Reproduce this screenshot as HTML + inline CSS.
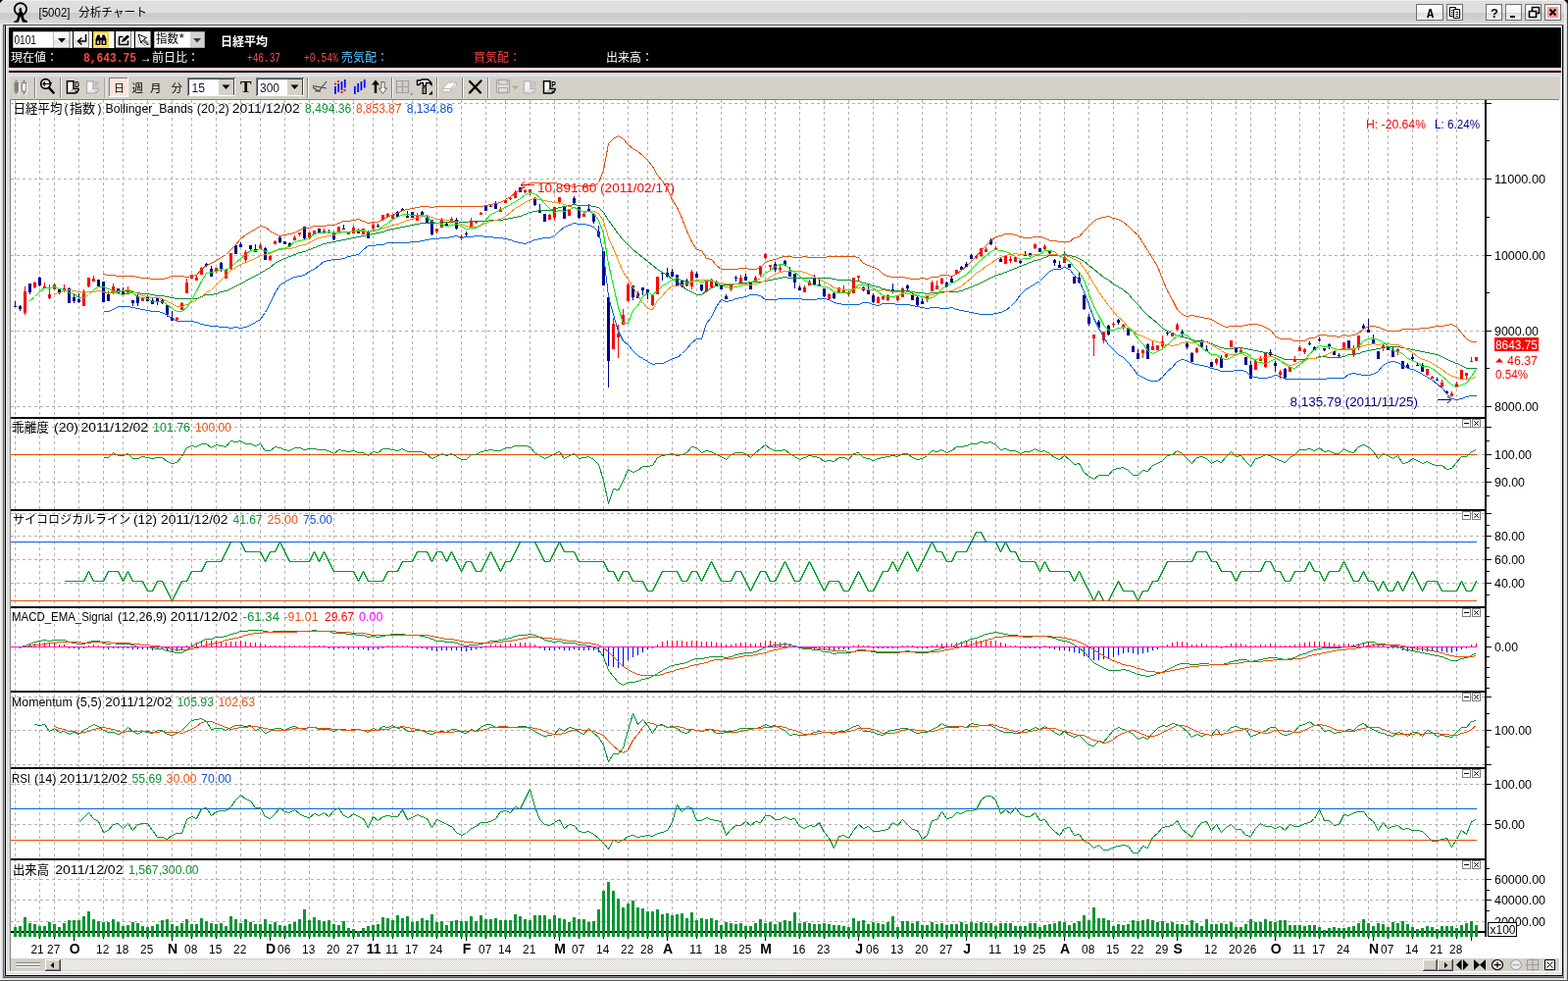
<!DOCTYPE html><html><head><meta charset="utf-8"><title>[5002] chart</title><style>html,body{margin:0;padding:0;background:#fff}svg{display:block;will-change:transform;opacity:0.9999}text{font-family:"Liberation Sans","Noto Sans CJK JP",sans-serif;white-space:pre}</style></head><body><svg width="1599" height="1000" viewBox="0 0 1599 1000"><defs><linearGradient id="tb" x1="0" y1="0" x2="0" y2="1"><stop offset="0" stop-color="#eee"/><stop offset="0.04" stop-color="#eee"/><stop offset="0.05" stop-color="#dedede"/><stop offset="0.52" stop-color="#dedede"/><stop offset="0.53" stop-color="#ccc"/><stop offset="0.68" stop-color="#ccc"/><stop offset="0.96" stop-color="#dcdcdc"/><stop offset="0.965" stop-color="#e8e8e8"/><stop offset="1" stop-color="#e8e8e8"/></linearGradient><linearGradient id="bt" x1="0" y1="0" x2="0" y2="1"><stop offset="0" stop-color="#ffffff"/><stop offset="0.5" stop-color="#f4f4f4"/><stop offset="0.52" stop-color="#dcdcdc"/><stop offset="1" stop-color="#f4f4f4"/></linearGradient><linearGradient id="lf" x1="0" y1="0" x2="1" y2="0"><stop offset="0" stop-color="#f6f6f6"/><stop offset="1" stop-color="#d4d4d4"/></linearGradient><pattern id="dith" width="2" height="2" patternUnits="userSpaceOnUse"><rect width="2" height="2" fill="#d4d0c8"/><rect width="1" height="1" fill="#fff"/><rect x="1" y="1" width="1" height="1" fill="#fff"/></pattern></defs><rect width="1599" height="1000" fill="#dcdcdc"/><rect x="0" y="0" width="1597" height="25" fill="url(#tb)"/><rect x="0" y="25" width="3" height="972" fill="url(#lf)"/><rect x="3" y="25" width="1592" height="1" fill="#505050"/><rect x="3" y="25" width="1" height="972" fill="#606060"/><rect x="4" y="26" width="1" height="970" fill="#b0b0b0"/><rect x="5" y="26" width="1" height="969" fill="#000"/><rect x="6" y="26" width="1587" height="2" fill="#f2f2f2"/><rect x="6" y="26" width="1" height="968" fill="#ececec"/><rect x="7" y="28" width="3" height="965" fill="#dcdcdc"/><rect x="1591" y="28" width="2" height="966" fill="#ececec"/><rect x="1593" y="26" width="1" height="969" fill="#000"/><rect x="1594" y="25" width="1" height="972" fill="#a0a0a0"/><rect x="1595" y="0" width="3" height="999" fill="url(#lf)"/><rect x="1598" y="0" width="1" height="1000" fill="#505050"/><rect x="6" y="990" width="1587" height="1" fill="#fff"/><rect x="6" y="991" width="1587" height="2" fill="#e2e2e2"/><rect x="6" y="993" width="1587" height="1" fill="#f8f8f8"/><rect x="5" y="994" width="1589" height="1" fill="#000"/><rect x="4" y="995" width="1591" height="1" fill="#909090"/><rect x="3" y="996" width="1592" height="1" fill="#505050"/><rect x="0" y="997" width="1598" height="2" fill="#e8e8e8"/><rect x="0" y="999" width="1599" height="1" fill="#505050"/><path d="M0 0h3l-3 3z" fill="#000"/><path d="M1599 0h-4l4 4z" fill="#000"/><rect x="9" y="28" width="1583" height="41" fill="#000"/><rect x="9" y="69" width="1583" height="3" fill="#ffd2d2"/><rect x="9" y="72" width="1583" height="2" fill="#000"/><rect x="9" y="74" width="1583" height="2" fill="#d2d6f0"/><rect x="9" y="76" width="1583" height="2" fill="#e2e2e0"/><rect x="10" y="78" width="1581" height="23" fill="#d4d0c8"/><rect x="10" y="101" width="1581" height="889" fill="#fff"/><rect x="10" y="101" width="1580" height="1" fill="#808080"/><rect x="10" y="101" width="1" height="889" fill="#808080"/><rect x="11" y="977" width="1579" height="13" fill="#d4d0c8"/><rect x="62" y="978" width="1389" height="11" fill="url(#dith)"/><circle cx="20.9" cy="9.2" r="6.1" fill="none" stroke="#000" stroke-width="1.8"/><path d="M20.9 7.6L22.1 8.5L22 10.6L22.9 12.8L24.6 14.6L23.9 17L25.2 20L27.9 21.2V22.7L23.4 22.8L22 20.5L21.3 17.3H20.5L19.6 20.5L18.5 22.8H14.2V21.8L17 20.4L18.1 17L17.5 14.6L19.4 12.6L20 10.8L19 10.4L20 8.5z" fill="#000"/><text x="39.5" y="17" fill="#000" font-size="12.5" textLength="32" lengthAdjust="spacingAndGlyphs">[5002]</text><text x="80" y="17" fill="#000" font-size="12" textLength="70" lengthAdjust="spacingAndGlyphs">分析チャート</text><rect x="1444.5" y="4.5" width="27" height="16" fill="url(#bt)" stroke="#707070"/><rect x="1475.5" y="4.5" width="16" height="16" fill="url(#bt)" stroke="#707070"/><rect x="1515.5" y="4.5" width="16" height="16" fill="url(#bt)" stroke="#707070"/><rect x="1535.5" y="4.5" width="16" height="16" fill="url(#bt)" stroke="#707070"/><rect x="1555.5" y="4.5" width="16" height="16" fill="url(#bt)" stroke="#707070"/><rect x="1575.5" y="4.5" width="16" height="16" fill="url(#bt)" stroke="#707070"/><text x="1458.5" y="17.5" fill="#000" font-size="12" style="font-family:'Liberation Mono',monospace" font-weight="bold" text-anchor="middle">A</text><path d="M1478.500 7.500h6v9h-6z" fill="#fff" stroke="#000" stroke-width="1"/><path d="M1482.500 9.500h6v9h-6z" fill="#fff" stroke="#000" stroke-width="1"/><path d="M1480 10.500h1.500M1480 12.500h1.500M1480 14.500h1.500M1484.500 12.500h2.500M1484.500 14.500h2.500M1484.500 16.500h2.500" stroke="#000" stroke-width="1"/><text x="1524" y="18" fill="#000" font-size="13" font-weight="bold" text-anchor="middle">?</text><rect x="1540" y="16" width="5" height="2" fill="#000"/><path d="M1562.500 7.5h7v6h-7z" fill="none" stroke="#000" stroke-width="1.6"/><path d="M1559.5 11.500h7v6h-7z" fill="#f4f4f4" stroke="#000" stroke-width="1.6"/><rect x="1578" y="7" width="11" height="11" fill="#ff9c9c"/><path d="M1580.500 9.500l6 6m0 -6l-6 6" stroke="#000" stroke-width="1.800"/><rect x="13" y="32" width="58" height="17" fill="#707070"/><rect x="13.5" y="32.5" width="41" height="16" fill="#fff"/><rect x="55" y="32.500" width="15.5" height="16" fill="url(#bt)"/><path d="M59 39h8l-4 4.500z" fill="#000"/><text x="14.5" y="44.5" fill="#000" font-size="12" textLength="22.5" lengthAdjust="spacingAndGlyphs">0101</text><rect x="71.3" y="32" width="2.7" height="17" fill="#fff"/><rect x="91" y="32" width="2.8" height="17" fill="#fff"/><rect x="111" y="32" width="5.5" height="17" fill="#fff"/><rect x="134" y="32" width="2.8" height="17" fill="#fff"/><rect x="75" y="32" width="16" height="17" fill="#808080"/><rect x="75" y="32" width="15" height="16" fill="#fff"/><rect x="76" y="33" width="14" height="15" fill="url(#bt)"/><rect x="118" y="32" width="16" height="17" fill="#808080"/><rect x="118" y="32" width="15" height="16" fill="#fff"/><rect x="119" y="33" width="14" height="15" fill="url(#bt)"/><rect x="138" y="32" width="16" height="17" fill="#808080"/><rect x="138" y="32" width="15" height="16" fill="#fff"/><rect x="139" y="33" width="14" height="15" fill="url(#bt)"/><rect x="95" y="32" width="16" height="17" fill="#ffd23c"/><rect x="97" y="34" width="12" height="13" fill="#fff8dc"/><path d="M87.5 35v7h-7M83.500 38.5l-4 3.500l4 3.500" fill="none" stroke="#000" stroke-width="1.500"/><path d="M97.500 46v-6l1.800 -4.500h2.400l0.800 4.500v6zM103.500 46v-6l0.800 -4.500h2.400l1.800 4.500v6z" fill="#000"/><rect x="102" y="38.500" width="2" height="2.500" fill="#000"/><rect x="99" y="41.500" width="2" height="3.200" fill="#ffd23c"/><rect x="105" y="41.500" width="2" height="3.200" fill="#ffd23c"/><path d="M121.500 37.500v8h9v-4M121.500 37.500h4" fill="none" stroke="#000" stroke-width="1.5"/><path d="M124 43l1 -3l5 -4.500l2 2l-5 4.500z" fill="#000"/><path d="M141 35l3 9l1.500 -3l5 5l1 -1l-5 -5l3 -1.500z" fill="#fff" stroke="#000" stroke-width="1"/><path d="M146 42l4 4M148 41l3 3M145 44l3 3" stroke="#606060" stroke-width="0.8"/><rect x="157" y="32" width="52" height="17" fill="#707070"/><rect x="157.500" y="32.500" width="36.500" height="16" fill="#fff"/><rect x="194" y="32.500" width="14.500" height="16" fill="#d2d2d2"/><path d="M197 39h8l-4 4.500z" fill="#383838"/><text x="159" y="44" fill="#000" font-size="12" textLength="23" lengthAdjust="spacingAndGlyphs">指数</text><text x="182.5" y="43" fill="#000" font-size="12" textLength="5.5" lengthAdjust="spacingAndGlyphs">*</text><text x="225" y="46.5" fill="#fff" font-size="12.5" font-weight="bold" textLength="48" lengthAdjust="spacingAndGlyphs">日経平均</text><text x="11" y="63" fill="#fff" font-size="12" textLength="48" lengthAdjust="spacingAndGlyphs">現在値：</text><text x="85" y="63" fill="#ff4848" font-size="12" textLength="54" lengthAdjust="spacingAndGlyphs" style="font-family:'Liberation Mono',monospace" font-weight="bold">8,643.75</text><text x="143" y="63" fill="#fff" font-size="12" textLength="60" lengthAdjust="spacingAndGlyphs">→前日比：</text><text x="252" y="63.3" fill="#ff4848" font-size="12.5" textLength="34" lengthAdjust="spacingAndGlyphs" style="font-family:'Liberation Mono',monospace">+46.37</text><text x="310" y="63.3" fill="#ff4848" font-size="12.5" textLength="35" lengthAdjust="spacingAndGlyphs" style="font-family:'Liberation Mono',monospace">+0.54%</text><text x="348" y="63" fill="#60c8ff" font-size="12" textLength="48" lengthAdjust="spacingAndGlyphs">売気配：</text><text x="483" y="63" fill="#ff4040" font-size="12" textLength="48" lengthAdjust="spacingAndGlyphs">買気配：</text><text x="618" y="63" fill="#fff" font-size="12" textLength="48" lengthAdjust="spacingAndGlyphs">出来高：</text><rect x="35" y="79" width="1" height="21" fill="#808080"/><rect x="36" y="79" width="1" height="21" fill="#fff"/><rect x="61" y="79" width="1" height="21" fill="#808080"/><rect x="62" y="79" width="1" height="21" fill="#fff"/><rect x="106.5" y="79" width="1" height="21" fill="#808080"/><rect x="107.5" y="79" width="1" height="21" fill="#fff"/><rect x="313" y="79" width="1" height="21" fill="#808080"/><rect x="314" y="79" width="1" height="21" fill="#fff"/><rect x="399" y="79" width="1" height="21" fill="#808080"/><rect x="400" y="79" width="1" height="21" fill="#fff"/><rect x="445" y="79" width="1" height="21" fill="#808080"/><rect x="446" y="79" width="1" height="21" fill="#fff"/><rect x="471" y="79" width="1" height="21" fill="#808080"/><rect x="472" y="79" width="1" height="21" fill="#fff"/><rect x="497" y="79" width="1" height="21" fill="#808080"/><rect x="498" y="79" width="1" height="21" fill="#fff"/><path d="M16.500 81.500v14.500M24.500 81.500v14.500" stroke="#808080" stroke-width="1.600"/><rect x="14.500" y="84" width="4.500" height="9.500" fill="#808080"/><rect x="22.500" y="84.500" width="4" height="8.500" fill="#fff" stroke="#808080" stroke-width="1"/><path d="M19.500 85v9M27.500 85v9M17.500 96h2M25.500 96h2" stroke="#fff" stroke-width="1"/><circle cx="46.500" cy="85.500" r="4.800" fill="#e8e8e8" stroke="#000" stroke-width="1.700"/><path d="M50 89.500l4.500 5" stroke="#000" stroke-width="2.600" stroke-linecap="round"/><path d="M44 85.500h6l3 -1M46 83.500l-2 2l2 2" stroke="#000" stroke-width="1.200" fill="none"/><path d="M68.5 82.800h6.500v7.700h5v1.500l-3 3h-8.500z" fill="#fff" stroke="#000" stroke-width="1.500" stroke-linejoin="miter"/><path d="M69.3 94.200l6 -5.500v5.500z" fill="#000" opacity="0.22"/><path d="M77.0 92v2.500h2.500" fill="none" stroke="#000" stroke-width="1"/><text x="76.2" y="89.3" fill="#000" font-size="9" textLength="4.6" lengthAdjust="spacingAndGlyphs" font-weight="bold">D</text><path d="M88.5 82.800h6.500v7.700h5v1.500l-3 3h-8.500z" fill="#f4f4f4" stroke="#b4b4b4" stroke-width="1.500" stroke-linejoin="miter"/><path d="M89.3 94.200l6 -5.500v5.500z" fill="#b4b4b4" opacity="0.22"/><path d="M97.0 92v2.500h2.500" fill="none" stroke="#b4b4b4" stroke-width="1"/><text x="96.2" y="89.3" fill="#b4b4b4" font-size="9" textLength="4.600" lengthAdjust="spacingAndGlyphs" font-weight="bold">R</text><rect x="111" y="79" width="20" height="20" fill="#fff"/><rect x="111" y="79" width="19" height="19" fill="#808080"/><rect x="112" y="80" width="18" height="18" fill="#ffe4dc"/><text x="116" y="94" fill="#000" font-size="11">日</text><text x="134.5" y="94" fill="#000" font-size="11.5">週</text><text x="153" y="94" fill="#000" font-size="11.5">月</text><text x="174.5" y="94" fill="#000" font-size="11.5">分</text><rect x="191" y="79" width="49" height="19" fill="#808080"/><rect x="192" y="80" width="48" height="18" fill="#fff"/><rect x="192" y="80" width="47" height="17" fill="#404040"/><rect x="193" y="81" width="45" height="16" fill="#fff"/><rect x="223" y="81" width="15" height="16" fill="#d4d0c8"/><path d="M226.5 86.500h8l-4 4.500z" fill="#000"/><text x="195.5" y="94" fill="#101030" font-size="12.5" textLength="13.5" lengthAdjust="spacingAndGlyphs">15</text><rect x="261" y="79" width="49" height="19" fill="#808080"/><rect x="262" y="80" width="48" height="18" fill="#fff"/><rect x="262" y="80" width="47" height="17" fill="#404040"/><rect x="263" y="81" width="45" height="16" fill="#fff"/><rect x="293" y="81" width="15" height="16" fill="#d4d0c8"/><path d="M296.5 86.500h8l-4 4.500z" fill="#000"/><text x="265" y="94" fill="#101030" font-size="12.5" textLength="20" lengthAdjust="spacingAndGlyphs">300</text><text x="250.75" y="94" fill="#000" font-size="16.5" textLength="11.5" lengthAdjust="spacingAndGlyphs" style="font-family:'Liberation Serif',serif" font-weight="bold" text-anchor="middle">T</text><path d="M319 89l6 4l8 -10M319 87.500l14 2.500M321 93h6" stroke="#404040" stroke-width="1.100" fill="none"/><rect x="341.0" y="88" width="1.700" height="8" fill="#0000ff"/><rect x="344.3" y="85" width="1.700" height="9" fill="#0000ff"/><rect x="347.6" y="83" width="1.700" height="9" fill="#0000ff"/><rect x="350.9" y="81" width="1.700" height="8.5" fill="#0000ff"/><rect x="361.0" y="88" width="1.700" height="8" fill="#0000ff"/><rect x="364.3" y="85" width="1.700" height="9" fill="#0000ff"/><rect x="367.6" y="83" width="1.700" height="9" fill="#0000ff"/><rect x="370.9" y="81" width="1.700" height="8.5" fill="#0000ff"/><rect x="341" y="84.5" width="2" height="2" fill="#ff0000"/><rect x="344" y="82" width="2" height="2" fill="#ff0000"/><rect x="347.5" y="93" width="2" height="2" fill="#ff0000"/><rect x="350.5" y="91" width="2" height="2" fill="#ff0000"/><path d="M383 81.500l4 5h-2.800v8.500h-2.400v-8.500h-2.800z" fill="#000"/><path d="M389 83.500h3v6.500h2.500l-4 5.500l-4 -5.500h2.500z" fill="#fff" stroke="#404040" stroke-width="0.800"/><path d="M404.500 82.500h12v12h-12zM410.500 82.500v12M404.500 88.500h12" fill="none" stroke="#a0a0a0" stroke-width="1.200"/><path d="M421 93.500v3.500h-3.500z" fill="#a0a0a0"/><path d="M425.500 82h3l2 -1h6l3.500 3.500v2l-2 -2h-3.500v3h-3v-3h-2.500l-1.500 2h-2z" fill="#fff" stroke="#000" stroke-width="1.400"/><rect x="431" y="89" width="3.500" height="6.500" fill="#909090" stroke="#000" stroke-width="1"/><path d="M441 92.500v4h-4z" fill="#000"/><path d="M451.500 90.500l6 -6.500h8l-6 6.500zM451.500 90.500v3h8v-3M459.500 93.500l6 -6.500v-3" fill="#fff" stroke="#b8b8b8" stroke-width="1"/><path d="M479 83l11 11.500M490.500 82.500l-11.500 12" stroke="#000" stroke-width="2.400" stroke-linecap="round"/><rect x="506.500" y="81.500" width="13" height="13" rx="1.500" fill="#e0deda" stroke="#a8a8a8" stroke-width="1.300"/><path d="M508.500 82v4h9v-4M508.500 94v-4.500h9v4.500" fill="none" stroke="#a8a8a8" stroke-width="1.200"/><path d="M522 87.500h7l-3.500 4z" fill="#a8a8a8"/><path d="M534.5 82.800h6.500v7.700h5v1.500l-3 3h-8.500z" fill="#f4f4f4" stroke="#b8b8b8" stroke-width="1.500" stroke-linejoin="miter"/><path d="M535.3 94.200l6 -5.500v5.500z" fill="#b8b8b8" opacity="0.22"/><path d="M543.0 92v2.500h2.500" fill="none" stroke="#b8b8b8" stroke-width="1"/><text x="542.2" y="89.3" fill="#b8b8b8" font-size="9" textLength="4.6" lengthAdjust="spacingAndGlyphs" font-weight="bold">0</text><path d="M554.5 82.800h6.500v7.700h5v1.500l-3 3h-8.500z" fill="#fff" stroke="#000" stroke-width="1.500" stroke-linejoin="miter"/><path d="M555.3 94.200l6 -5.500v5.500z" fill="#000" opacity="0.22"/><path d="M563.0 92v2.500h2.500" fill="none" stroke="#000" stroke-width="1"/><text x="562.2" y="89.3" fill="#000" font-size="9" textLength="4.6" lengthAdjust="spacingAndGlyphs" font-weight="bold">P</text><path d="M16 981.500h25M16 984.500h25" stroke="#808080" stroke-width="1"/><path d="M16 982.500h25M16 985.500h25" stroke="#fff" stroke-width="1"/><rect x="46" y="978" width="16" height="12" fill="#404040"/><rect x="46" y="978" width="15" height="11" fill="#fff"/><rect x="47" y="979" width="14" height="10" fill="#808080"/><rect x="47" y="979" width="13" height="9" fill="#d4d0c8"/><rect x="1451" y="978" width="15" height="12" fill="#404040"/><rect x="1451" y="978" width="14" height="11" fill="#fff"/><rect x="1452" y="979" width="13" height="10" fill="#808080"/><rect x="1452" y="979" width="12" height="9" fill="#d4d0c8"/><rect x="1466" y="978" width="16" height="12" fill="#404040"/><rect x="1466" y="978" width="15" height="11" fill="#fff"/><rect x="1467" y="979" width="14" height="10" fill="#808080"/><rect x="1467" y="979" width="13" height="9" fill="#d4d0c8"/><path d="M55 981v6l-3.500 -3z" fill="#000"/><path d="M1473 981v6l3.500 -3z" fill="#000"/><path d="M1485 983.500l5.500 -5.500v11zM1497.500 983.500l-5.500 -5.500v11z" fill="#000"/><path d="M1503 978v11l6 -5.500zM1515 978v11l-6 -5.500z" fill="#000"/><ellipse cx="1527" cy="983.500" rx="5.500" ry="5" fill="#fff" stroke="#000" stroke-width="1.200"/><path d="M1523.500 983.500h7M1527 980.500v6" stroke="#000" stroke-width="1.300"/><ellipse cx="1546" cy="983.500" rx="5.500" ry="5" fill="#ececec" stroke="#a8a8a8" stroke-width="1.200"/><path d="M1542.500 983.500h7" stroke="#a8a8a8" stroke-width="1.300"/><path d="M1557.500 978.500h11v10h-11zM1563 977v13M1556 983.500h14" fill="none" stroke="#a0a0a0" stroke-width="1.200"/><path d="M1575.500 978.500h10v10h-10z" fill="#fff" stroke="#000" stroke-width="1"/><path d="M1577.500 980.500l6 6M1583.500 980.500l-6 6" fill="none" stroke="#000" stroke-width="1"/><g><path d="M15.5 102V949M40.5 102V949M55.5 102V949M80.5 102V949M105.5 102V949M125.5 102V949M150.5 102V949M175.5 102V949M195.5 102V949M220.5 102V949M245.5 102V949M265.5 102V949M290.5 102V949M315.5 102V949M340.5 102V949M360.5 102V949M380.5 102V949M400.5 102V949M420.5 102V949M445.5 102V949M470.5 102V949M495.5 102V949M515.5 102V949M540.5 102V949M565.5 102V949M590.5 102V949M615.5 102V949M640.5 102V949M660.5 102V949M685.5 102V949M710.5 102V949M735.5 102V949M760.5 102V949M780.5 102V949M790.5 102V949M815.5 102V949M840.5 102V949M865.5 102V949M890.5 102V949M915.5 102V949M940.5 102V949M965.5 102V949M990.5 102V949M1015.5 102V949M1040.5 102V949M1060.5 102V949M1085.5 102V949M1110.5 102V949M1135.5 102V949M1160.5 102V949M1185.5 102V949M1210.5 102V949M1235.5 102V949M1260.5 102V949M1275.5 102V949M1300.5 102V949M1325.5 102V949M1345.5 102V949M1370.5 102V949M1395.5 102V949M1415.5 102V949M1440.5 102V949M1465.5 102V949M1485.5 102V949" stroke="#b0b0b0" stroke-width="1" stroke-dasharray="3 3" fill="none" shape-rendering="crispEdges"/><path d="M11 105.5H1514M11 182.5H1514M11 260.5H1514M11 337.5H1514M11 414.5H1514M11 435.5H1514M11 463.5H1514M11 491.5H1514M11 523.5H1514M11 546.5H1514M11 570.5H1514M11 594.5H1514M11 710.5H1514M11 744.5H1514M11 779.5H1514M11 799.5H1514M11 840.5H1514M11 896.5H1514M11 917.5H1514M11 939.5H1514" stroke="#b0b0b0" stroke-width="1" stroke-dasharray="3 3" fill="none" shape-rendering="crispEdges"/><path d="M25 292h1V321h-1zM35 287h1V294h-1zM45 288h1V294h-1zM50 290h1V305h-1zM55 289h1V295h-1zM65 290h1V298h-1zM85 295h1V312h-1zM90 283h1V293h-1zM95 281h1V287h-1zM115 289h1V300h-1zM130 292h1V300h-1zM145 304h1V307h-1zM180 323h1V327h-1zM185 308h1V316h-1zM190 284h1V299h-1zM195 280h1V284h-1zM200 281h1V286h-1zM205 272h1V280h-1zM220 273h1V278h-1zM230 274h1V284h-1zM235 258h1V275h-1zM250 255h1V267h-1zM265 248h1V254h-1zM275 260h1V266h-1zM280 245h1V249h-1zM300 240h1V245h-1zM305 237h1V241h-1zM315 237h1V244h-1zM320 235h1V239h-1zM330 233h1V237h-1zM345 231h1V238h-1zM355 236h1V239h-1zM360 230h1V238h-1zM370 233h1V239h-1zM380 227h1V235h-1zM390 219h1V225h-1zM395 217h1V222h-1zM400 218h1V223h-1zM425 217h1V225h-1zM445 233h1V238h-1zM450 222h1V232h-1zM460 221h1V226h-1zM470 239h1V245h-1zM480 222h1V232h-1zM485 225h1V228h-1zM490 216h1V219h-1zM510 211h1V216h-1zM515 203h1V207h-1zM520 200h1V204h-1zM525 194h1V202h-1zM535 193h1V197h-1zM540 193h1V199h-1zM560 218h1V224h-1zM565 211h1V225h-1zM570 201h1V208h-1zM580 214h1V220h-1zM595 217h1V221h-1zM625 324h1V356h-1zM630 331h1V365h-1zM635 315h1V331h-1zM640 288h1V307h-1zM665 301h1V312h-1zM670 282h1V300h-1zM705 275h1V295h-1zM720 287h1V298h-1zM725 284h1V293h-1zM745 289h1V297h-1zM755 280h1V288h-1zM770 281h1V288h-1zM775 271h1V282h-1zM780 258h1V264h-1zM785 270h1V276h-1zM795 270h1V278h-1zM820 291h1V298h-1zM825 285h1V291h-1zM845 299h1V306h-1zM855 293h1V298h-1zM860 291h1V299h-1zM865 297h1V302h-1zM870 283h1V299h-1zM875 281h1V286h-1zM895 302h1V309h-1zM900 301h1V306h-1zM905 300h1V307h-1zM915 301h1V307h-1zM920 293h1V303h-1zM945 302h1V308h-1zM950 286h1V297h-1zM955 286h1V295h-1zM960 283h1V290h-1zM975 275h1V279h-1zM995 260h1V264h-1zM1000 253h1V262h-1zM1005 252h1V257h-1zM1015 251h1V255h-1zM1025 261h1V269h-1zM1030 261h1V268h-1zM1035 261h1V267h-1zM1055 248h1V254h-1zM1065 249h1V255h-1zM1085 256h1V268h-1zM1115 341h1V363h-1zM1125 338h1V350h-1zM1135 328h1V334h-1zM1145 330h1V336h-1zM1165 356h1V365h-1zM1175 348h1V357h-1zM1180 352h1V357h-1zM1185 342h1V355h-1zM1195 339h1V343h-1zM1200 329h1V337h-1zM1220 354h1V360h-1zM1240 365h1V372h-1zM1250 360h1V365h-1zM1255 347h1V354h-1zM1265 354h1V360h-1zM1280 366h1V377h-1zM1285 363h1V368h-1zM1290 359h1V375h-1zM1305 377h1V386h-1zM1315 374h1V379h-1zM1320 363h1V369h-1zM1325 352h1V358h-1zM1330 355h1V361h-1zM1370 349h1V356h-1zM1380 352h1V364h-1zM1385 342h1V357h-1zM1410 351h1V358h-1zM1425 355h1V362h-1zM1455 376h1V383h-1zM1460 383h1V386h-1zM1470 387h1V395h-1zM1480 399h1V404h-1zM1485 389h1V394h-1zM1490 377h1V386h-1zM1495 380h1V386h-1zM1500 364h1V369h-1zM1505 364h1V368h-1zM24 297h3V319h-3zM34 288h3V293h-3zM44 292h3V294h-3zM49 300h3V304h-3zM54 290h3V295h-3zM64 294h3V296h-3zM84 297h3V312h-3zM89 283h3V292h-3zM94 284h3V287h-3zM114 292h3V297h-3zM129 295h3V300h-3zM144 304h3V307h-3zM179 324h3V326h-3zM184 309h3V316h-3zM189 288h3V299h-3zM194 280h3V284h-3zM199 283h3V286h-3zM204 273h3V280h-3zM219 273h3V276h-3zM229 275h3V284h-3zM234 258h3V274h-3zM249 257h3V265h-3zM264 250h3V254h-3zM274 261h3V265h-3zM279 246h3V249h-3zM299 242h3V245h-3zM304 237h3V239h-3zM314 237h3V243h-3zM319 235h3V239h-3zM329 235h3V237h-3zM344 231h3V238h-3zM354 237h3V239h-3zM359 232h3V238h-3zM369 233h3V239h-3zM379 229h3V233h-3zM389 219h3V224h-3zM394 218h3V221h-3zM399 219h3V223h-3zM424 219h3V225h-3zM444 233h3V236h-3zM449 224h3V232h-3zM459 223h3V226h-3zM469 241h3V243h-3zM479 225h3V231h-3zM484 226h3V227h-3zM489 217h3V219h-3zM509 213h3V216h-3zM514 204h3V207h-3zM519 202h3V203h-3zM524 196h3V202h-3zM534 194h3V196h-3zM539 193h3V196h-3zM559 219h3V224h-3zM564 211h3V222h-3zM569 201h3V207h-3zM579 214h3V220h-3zM594 218h3V221h-3zM624 330h3V356h-3zM629 340h3V344h-3zM634 321h3V331h-3zM639 290h3V307h-3zM664 301h3V311h-3zM669 282h3V300h-3zM704 277h3V292h-3zM719 287h3V297h-3zM724 285h3V293h-3zM744 291h3V295h-3zM754 283h3V288h-3zM769 283h3V288h-3zM774 271h3V280h-3zM779 259h3V263h-3zM784 270h3V272h-3zM794 273h3V275h-3zM819 293h3V298h-3zM824 287h3V291h-3zM844 300h3V305h-3zM854 293h3V298h-3zM859 295h3V298h-3zM864 298h3V300h-3zM869 283h3V299h-3zM874 281h3V283h-3zM894 303h3V309h-3zM899 302h3V305h-3zM904 301h3V306h-3zM914 302h3V306h-3zM919 294h3V303h-3zM944 302h3V304h-3zM949 288h3V297h-3zM954 291h3V295h-3zM959 284h3V289h-3zM974 275h3V279h-3zM994 261h3V263h-3zM999 253h3V261h-3zM1004 254h3V257h-3zM1014 253h3V254h-3zM1024 261h3V269h-3zM1029 264h3V266h-3zM1034 262h3V267h-3zM1054 249h3V253h-3zM1064 251h3V254h-3zM1084 262h3V268h-3zM1114 341h3V345h-3zM1124 338h3V347h-3zM1134 330h3V331h-3zM1144 331h3V334h-3zM1164 357h3V360h-3zM1174 353h3V357h-3zM1179 352h3V357h-3zM1184 348h3V353h-3zM1194 339h3V343h-3zM1199 331h3V336h-3zM1219 355h3V359h-3zM1239 366h3V370h-3zM1249 361h3V364h-3zM1254 347h3V354h-3zM1264 357h3V360h-3zM1279 368h3V377h-3zM1284 365h3V368h-3zM1289 360h3V374h-3zM1304 379h3V382h-3zM1314 374h3V379h-3zM1319 367h3V369h-3zM1324 354h3V358h-3zM1329 356h3V359h-3zM1369 349h3V356h-3zM1379 356h3V362h-3zM1384 342h3V355h-3zM1409 352h3V355h-3zM1424 356h3V358h-3zM1454 376h3V382h-3zM1459 384h3V386h-3zM1469 390h3V394h-3zM1479 401h3V404h-3zM1484 391h3V394h-3zM1489 377h3V386h-3zM1494 380h3V383h-3zM1499 368h3V369h-3zM1504 364h3V368h-3z" fill="#ff0000" shape-rendering="crispEdges"/><path d="M15 307h1V313h-1zM20 311h1V317h-1zM30 289h1V300h-1zM40 282h1V292h-1zM60 294h1V300h-1zM70 293h1V309h-1zM75 300h1V309h-1zM80 299h1V309h-1zM100 285h1V292h-1zM105 287h1V308h-1zM110 297h1V307h-1zM120 294h1V299h-1zM125 293h1V300h-1zM135 306h1V312h-1zM140 300h1V312h-1zM150 301h1V307h-1zM155 303h1V310h-1zM160 303h1V311h-1zM165 304h1V310h-1zM170 311h1V323h-1zM175 317h1V327h-1zM210 268h1V272h-1zM215 271h1V282h-1zM225 267h1V277h-1zM240 250h1V259h-1zM245 247h1V252h-1zM255 250h1V256h-1zM260 249h1V257h-1zM270 252h1V265h-1zM285 241h1V248h-1zM290 246h1V249h-1zM295 247h1V252h-1zM310 231h1V244h-1zM325 233h1V238h-1zM335 234h1V238h-1zM340 236h1V245h-1zM350 229h1V234h-1zM365 233h1V238h-1zM375 235h1V243h-1zM385 228h1V232h-1zM405 215h1V221h-1zM410 212h1V215h-1zM415 215h1V222h-1zM420 216h1V222h-1zM430 215h1V219h-1zM435 220h1V227h-1zM440 224h1V240h-1zM455 227h1V231h-1zM465 222h1V234h-1zM475 236h1V241h-1zM495 209h1V215h-1zM500 208h1V211h-1zM505 205h1V213h-1zM530 191h1V196h-1zM545 201h1V210h-1zM550 208h1V217h-1zM555 218h1V226h-1zM575 211h1V223h-1zM585 200h1V208h-1zM590 211h1V223h-1zM600 208h1V216h-1zM605 217h1V228h-1zM610 230h1V242h-1zM615 256h1V291h-1zM620 303h1V395h-1zM645 291h1V306h-1zM650 297h1V304h-1zM655 293h1V301h-1zM660 295h1V305h-1zM675 278h1V286h-1zM680 273h1V283h-1zM685 274h1V282h-1zM690 280h1V291h-1zM695 285h1V293h-1zM700 284h1V292h-1zM710 277h1V283h-1zM715 290h1V297h-1zM730 286h1V291h-1zM735 290h1V295h-1zM740 300h1V305h-1zM750 281h1V287h-1zM760 279h1V286h-1zM765 288h1V295h-1zM790 267h1V277h-1zM800 265h1V271h-1zM805 272h1V282h-1zM810 279h1V294h-1zM815 291h1V296h-1zM830 280h1V290h-1zM835 285h1V291h-1zM840 294h1V303h-1zM850 298h1V305h-1zM880 292h1V297h-1zM885 290h1V300h-1zM890 299h1V309h-1zM910 289h1V299h-1zM925 290h1V296h-1zM930 299h1V306h-1zM935 302h1V312h-1zM940 304h1V310h-1zM965 287h1V293h-1zM970 282h1V288h-1zM980 271h1V276h-1zM985 267h1V272h-1zM990 259h1V264h-1zM1010 243h1V250h-1zM1020 263h1V267h-1zM1040 265h1V269h-1zM1045 256h1V261h-1zM1050 258h1V262h-1zM1060 253h1V257h-1zM1070 255h1V259h-1zM1075 264h1V271h-1zM1080 266h1V273h-1zM1090 269h1V273h-1zM1095 282h1V289h-1zM1100 277h1V289h-1zM1105 300h1V316h-1zM1110 320h1V332h-1zM1120 326h1V335h-1zM1130 331h1V342h-1zM1140 325h1V331h-1zM1150 333h1V342h-1zM1155 352h1V359h-1zM1160 356h1V366h-1zM1170 350h1V366h-1zM1190 338h1V342h-1zM1205 336h1V343h-1zM1210 348h1V356h-1zM1215 359h1V369h-1zM1225 346h1V354h-1zM1230 352h1V358h-1zM1235 369h1V374h-1zM1245 362h1V375h-1zM1260 354h1V360h-1zM1270 364h1V372h-1zM1275 368h1V386h-1zM1295 356h1V363h-1zM1300 368h1V379h-1zM1310 375h1V386h-1zM1335 348h1V352h-1zM1340 353h1V357h-1zM1345 344h1V348h-1zM1350 355h1V358h-1zM1355 350h1V356h-1zM1360 357h1V362h-1zM1365 360h1V364h-1zM1375 347h1V356h-1zM1390 330h1V336h-1zM1395 325h1V339h-1zM1400 341h1V350h-1zM1405 358h1V366h-1zM1415 353h1V357h-1zM1420 354h1V364h-1zM1430 368h1V376h-1zM1435 370h1V376h-1zM1440 361h1V367h-1zM1445 370h1V373h-1zM1450 370h1V379h-1zM1465 385h1V388h-1zM1475 398h1V402h-1zM14 312h3V313h-3zM19 312h3V315h-3zM29 289h3V298h-3zM39 283h3V291h-3zM59 294h3V298h-3zM69 294h3V309h-3zM74 303h3V307h-3zM79 305h3V308h-3zM99 285h3V292h-3zM104 287h3V308h-3zM109 300h3V307h-3zM119 294h3V299h-3zM124 296h3V300h-3zM134 306h3V309h-3zM139 302h3V309h-3zM149 303h3V307h-3zM154 306h3V310h-3zM159 303h3V308h-3zM164 306h3V309h-3zM169 311h3V321h-3zM174 324h3V327h-3zM209 269h3V271h-3zM214 274h3V282h-3zM224 268h3V275h-3zM239 250h3V259h-3zM244 249h3V252h-3zM254 250h3V254h-3zM259 254h3V257h-3zM269 253h3V265h-3zM284 242h3V247h-3zM289 246h3V249h-3zM294 248h3V251h-3zM309 231h3V243h-3zM324 233h3V237h-3zM334 236h3V237h-3zM339 237h3V244h-3zM349 233h3V234h-3zM364 234h3V238h-3zM374 237h3V243h-3zM384 230h3V231h-3zM404 216h3V221h-3zM409 213h3V215h-3zM414 220h3V222h-3zM419 216h3V222h-3zM429 216h3V219h-3zM434 221h3V227h-3zM439 224h3V239h-3zM454 228h3V230h-3zM464 224h3V233h-3zM474 238h3V239h-3zM494 210h3V215h-3zM499 210h3V211h-3zM504 207h3V213h-3zM529 191h3V196h-3zM544 202h3V209h-3zM549 214h3V217h-3zM554 218h3V226h-3zM574 211h3V223h-3zM584 202h3V207h-3zM589 211h3V222h-3zM599 213h3V216h-3zM604 218h3V226h-3zM609 236h3V241h-3zM614 256h3V291h-3zM619 303h3V368h-3zM644 291h3V303h-3zM649 299h3V304h-3zM654 293h3V296h-3zM659 295h3V299h-3zM674 278h3V279h-3zM679 278h3V282h-3zM684 277h3V282h-3zM689 280h3V291h-3zM694 286h3V292h-3zM699 286h3V291h-3zM709 279h3V283h-3zM714 290h3V296h-3zM729 287h3V291h-3zM734 291h3V295h-3zM739 302h3V305h-3zM749 283h3V284h-3zM759 282h3V286h-3zM764 288h3V295h-3zM789 269h3V275h-3zM799 266h3V270h-3zM804 277h3V282h-3zM809 279h3V288h-3zM814 293h3V296h-3zM829 283h3V290h-3zM834 290h3V291h-3zM839 294h3V302h-3zM849 299h3V304h-3zM879 293h3V296h-3zM884 295h3V300h-3zM889 301h3V308h-3zM909 295h3V298h-3zM924 291h3V294h-3zM929 300h3V306h-3zM934 303h3V311h-3zM939 307h3V310h-3zM964 288h3V292h-3zM969 284h3V288h-3zM979 272h3V275h-3zM984 269h3V272h-3zM989 260h3V264h-3zM1009 245h3V249h-3zM1019 264h3V267h-3zM1039 266h3V268h-3zM1044 260h3V261h-3zM1049 258h3V261h-3zM1059 253h3V257h-3zM1069 256h3V258h-3zM1074 265h3V268h-3zM1079 270h3V273h-3zM1089 269h3V273h-3zM1094 282h3V289h-3zM1099 283h3V288h-3zM1104 301h3V315h-3zM1109 323h3V330h-3zM1119 328h3V334h-3zM1129 332h3V341h-3zM1139 326h3V329h-3zM1149 334h3V342h-3zM1154 353h3V359h-3zM1159 360h3V366h-3zM1169 351h3V366h-3zM1189 339h3V340h-3zM1204 338h3V341h-3zM1209 350h3V354h-3zM1214 360h3V369h-3zM1224 347h3V354h-3zM1229 356h3V358h-3zM1234 369h3V374h-3zM1244 365h3V375h-3zM1259 355h3V359h-3zM1269 364h3V372h-3zM1274 372h3V386h-3zM1294 359h3V362h-3zM1299 370h3V373h-3zM1309 376h3V385h-3zM1334 350h3V351h-3zM1339 354h3V357h-3zM1344 346h3V347h-3zM1349 355h3V357h-3zM1354 351h3V354h-3zM1359 358h3V362h-3zM1364 362h3V363h-3zM1374 347h3V355h-3zM1389 332h3V335h-3zM1394 336h3V339h-3zM1399 346h3V350h-3zM1404 358h3V366h-3zM1414 353h3V357h-3zM1419 357h3V364h-3zM1429 368h3V376h-3zM1434 372h3V375h-3zM1439 364h3V366h-3zM1444 372h3V373h-3zM1449 372h3V379h-3zM1464 387h3V388h-3zM1474 399h3V401h-3z" fill="#00008b" shape-rendering="crispEdges"/><path d="M105.5,298.5 L110.5,298.5 L115.5,297.5 L120.5,296.5 L125.5,296.5 L130.5,296.5 L135.5,297.5 L140.5,298.5 L145.5,299.5 L150.5,299.5 L155.5,300.5 L160.5,301.5 L165.5,301.5 L170.5,302.5 L175.5,303.5 L180.5,304.5 L185.5,304.5 L190.5,304.5 L195.5,304.5 L200.5,304.5 L205.5,302.5 L210.5,300.5 L215.5,300.5 L220.5,299.5 L225.5,297.5 L230.5,296.5 L235.5,294.5 L240.5,291.5 L245.5,289.5 L250.5,286.5 L255.5,283.5 L260.5,281.5 L265.5,278.5 L270.5,275.5 L275.5,272.5 L280.5,268.5 L285.5,265.5 L290.5,263.5 L295.5,261.5 L300.5,259.5 L305.5,257.5 L310.5,256.5 L315.5,254.5 L320.5,252.5 L325.5,250.5 L330.5,248.5 L335.5,247.5 L340.5,246.5 L345.5,245.5 L350.5,244.5 L355.5,243.5 L360.5,242.5 L365.5,241.5 L370.5,240.5 L375.5,239.5 L380.5,238.5 L385.5,237.5 L390.5,236.5 L395.5,234.5 L400.5,233.5 L405.5,232.5 L410.5,231.5 L415.5,230.5 L420.5,229.5 L425.5,228.5 L430.5,227.5 L435.5,227.5 L440.5,227.5 L445.5,227.5 L450.5,226.5 L455.5,226.5 L460.5,226.5 L465.5,225.5 L470.5,226.5 L475.5,226.5 L480.5,225.5 L485.5,225.5 L490.5,225.5 L495.5,225.5 L500.5,224.5 L505.5,224.5 L510.5,224.5 L515.5,223.5 L520.5,222.5 L525.5,221.5 L530.5,220.5 L535.5,218.5 L540.5,216.5 L545.5,215.5 L550.5,214.5 L555.5,214.5 L560.5,214.5 L565.5,213.5 L570.5,211.5 L575.5,210.5 L580.5,209.5 L585.5,208.5 L590.5,209.5 L595.5,209.5 L600.5,209.5 L605.5,210.5 L610.5,211.5 L615.5,216.5 L620.5,224.5 L625.5,231.5 L630.5,238.5 L635.5,244.5 L640.5,249.5 L645.5,254.5 L650.5,258.5 L655.5,262.5 L660.5,266.5 L665.5,270.5 L670.5,274.5 L675.5,277.5 L680.5,280.5 L685.5,284.5 L690.5,287.5 L695.5,291.5 L700.5,295.5 L705.5,297.5 L710.5,300.5 L715.5,300.5 L720.5,296.5 L725.5,293.5 L730.5,291.5 L735.5,290.5 L740.5,290.5 L745.5,290.5 L750.5,289.5 L755.5,288.5 L760.5,288.5 L765.5,287.5 L770.5,287.5 L775.5,287.5 L780.5,286.5 L785.5,285.5 L790.5,284.5 L795.5,283.5 L800.5,282.5 L805.5,283.5 L810.5,283.5 L815.5,283.5 L820.5,283.5 L825.5,283.5 L830.5,283.5 L835.5,283.5 L840.5,283.5 L845.5,283.5 L850.5,284.5 L855.5,285.5 L860.5,285.5 L865.5,285.5 L870.5,286.5 L875.5,286.5 L880.5,288.5 L885.5,289.5 L890.5,291.5 L895.5,292.5 L900.5,294.5 L905.5,295.5 L910.5,296.5 L915.5,296.5 L920.5,296.5 L925.5,296.5 L930.5,297.5 L935.5,298.5 L940.5,298.5 L945.5,299.5 L950.5,298.5 L955.5,298.5 L960.5,297.5 L965.5,297.5 L970.5,297.5 L975.5,297.5 L980.5,296.5 L985.5,294.5 L990.5,292.5 L995.5,290.5 L1000.5,288.5 L1005.5,285.5 L1010.5,283.5 L1015.5,280.5 L1020.5,279.5 L1025.5,277.5 L1030.5,275.5 L1035.5,273.5 L1040.5,271.5 L1045.5,269.5 L1050.5,267.5 L1055.5,265.5 L1060.5,264.5 L1065.5,262.5 L1070.5,260.5 L1075.5,260.5 L1080.5,260.5 L1085.5,259.5 L1090.5,260.5 L1095.5,261.5 L1100.5,263.5 L1105.5,266.5 L1110.5,270.5 L1115.5,274.5 L1120.5,278.5 L1125.5,282.5 L1130.5,285.5 L1135.5,289.5 L1140.5,292.5 L1145.5,295.5 L1150.5,299.5 L1155.5,305.5 L1160.5,310.5 L1165.5,316.5 L1170.5,321.5 L1175.5,325.5 L1180.5,329.5 L1185.5,334.5 L1190.5,337.5 L1195.5,339.5 L1200.5,342.5 L1205.5,343.5 L1210.5,344.5 L1215.5,346.5 L1220.5,347.5 L1225.5,347.5 L1230.5,348.5 L1235.5,350.5 L1240.5,352.5 L1245.5,354.5 L1250.5,355.5 L1255.5,355.5 L1260.5,354.5 L1265.5,354.5 L1270.5,355.5 L1275.5,356.5 L1280.5,357.5 L1285.5,358.5 L1290.5,359.5 L1295.5,360.5 L1300.5,362.5 L1305.5,364.5 L1310.5,366.5 L1315.5,366.5 L1320.5,366.5 L1325.5,366.5 L1330.5,366.5 L1335.5,365.5 L1340.5,365.5 L1345.5,363.5 L1350.5,363.5 L1355.5,364.5 L1360.5,364.5 L1365.5,364.5 L1370.5,363.5 L1375.5,361.5 L1380.5,361.5 L1385.5,360.5 L1390.5,358.5 L1395.5,357.5 L1400.5,356.5 L1405.5,355.5 L1410.5,354.5 L1415.5,353.5 L1420.5,353.5 L1425.5,353.5 L1430.5,354.5 L1435.5,355.5 L1440.5,356.5 L1445.5,357.5 L1450.5,358.5 L1455.5,359.5 L1460.5,360.5 L1465.5,361.5 L1470.5,363.5 L1475.5,366.5 L1480.5,368.5 L1485.5,370.5 L1490.5,372.5 L1495.5,375.5 L1500.5,375.5 L1505.5,375.5" stroke="#008c32" stroke-width="1" fill="none" stroke-linejoin="round" shape-rendering="crispEdges"/><path d="M105.5,279.5 L110.5,280.5 L115.5,280.5 L120.5,281.5 L125.5,281.5 L130.5,281.5 L135.5,281.5 L140.5,282.5 L145.5,283.5 L150.5,283.5 L155.5,284.5 L160.5,284.5 L165.5,284.5 L170.5,283.5 L175.5,281.5 L180.5,281.5 L185.5,281.5 L190.5,282.5 L195.5,281.5 L200.5,280.5 L205.5,274.5 L210.5,270.5 L215.5,268.5 L220.5,265.5 L225.5,262.5 L230.5,259.5 L235.5,254.5 L240.5,249.5 L245.5,243.5 L250.5,239.5 L255.5,236.5 L260.5,233.5 L265.5,230.5 L270.5,231.5 L275.5,235.5 L280.5,238.5 L285.5,240.5 L290.5,239.5 L295.5,238.5 L300.5,237.5 L305.5,234.5 L310.5,232.5 L315.5,232.5 L320.5,230.5 L325.5,230.5 L330.5,230.5 L335.5,229.5 L340.5,229.5 L345.5,227.5 L350.5,225.5 L355.5,225.5 L360.5,224.5 L365.5,223.5 L370.5,225.5 L375.5,227.5 L380.5,226.5 L385.5,226.5 L390.5,223.5 L395.5,221.5 L400.5,218.5 L405.5,217.5 L410.5,214.5 L415.5,213.5 L420.5,212.5 L425.5,211.5 L430.5,210.5 L435.5,210.5 L440.5,211.5 L445.5,210.5 L450.5,210.5 L455.5,210.5 L460.5,210.5 L465.5,210.5 L470.5,210.5 L475.5,210.5 L480.5,210.5 L485.5,210.5 L490.5,210.5 L495.5,209.5 L500.5,208.5 L505.5,207.5 L510.5,206.5 L515.5,203.5 L520.5,200.5 L525.5,196.5 L530.5,193.5 L535.5,189.5 L540.5,186.5 L545.5,186.5 L550.5,186.5 L555.5,186.5 L560.5,186.5 L565.5,186.5 L570.5,187.5 L575.5,189.5 L580.5,189.5 L585.5,190.5 L590.5,189.5 L595.5,189.5 L600.5,189.5 L605.5,189.5 L610.5,186.5 L615.5,173.5 L620.5,146.5 L625.5,141.5 L630.5,138.5 L635.5,141.5 L640.5,147.5 L645.5,151.5 L650.5,154.5 L655.5,158.5 L660.5,163.5 L665.5,169.5 L670.5,178.5 L675.5,184.5 L680.5,192.5 L685.5,203.5 L690.5,211.5 L695.5,222.5 L700.5,235.5 L705.5,246.5 L710.5,254.5 L715.5,255.5 L720.5,263.5 L725.5,264.5 L730.5,270.5 L735.5,274.5 L740.5,274.5 L745.5,274.5 L750.5,274.5 L755.5,273.5 L760.5,273.5 L765.5,274.5 L770.5,274.5 L775.5,272.5 L780.5,267.5 L785.5,265.5 L790.5,264.5 L795.5,262.5 L800.5,261.5 L805.5,261.5 L810.5,262.5 L815.5,262.5 L820.5,261.5 L825.5,262.5 L830.5,262.5 L835.5,262.5 L840.5,262.5 L845.5,261.5 L850.5,261.5 L855.5,261.5 L860.5,261.5 L865.5,261.5 L870.5,261.5 L875.5,262.5 L880.5,268.5 L885.5,270.5 L890.5,272.5 L895.5,274.5 L900.5,279.5 L905.5,281.5 L910.5,282.5 L915.5,282.5 L920.5,282.5 L925.5,283.5 L930.5,284.5 L935.5,284.5 L940.5,283.5 L945.5,284.5 L950.5,282.5 L955.5,282.5 L960.5,280.5 L965.5,280.5 L970.5,281.5 L975.5,279.5 L980.5,275.5 L985.5,271.5 L990.5,266.5 L995.5,261.5 L1000.5,255.5 L1005.5,250.5 L1010.5,245.5 L1015.5,241.5 L1020.5,240.5 L1025.5,238.5 L1030.5,238.5 L1035.5,239.5 L1040.5,241.5 L1045.5,242.5 L1050.5,242.5 L1055.5,241.5 L1060.5,241.5 L1065.5,242.5 L1070.5,245.5 L1075.5,245.5 L1080.5,246.5 L1085.5,246.5 L1090.5,246.5 L1095.5,242.5 L1100.5,241.5 L1105.5,235.5 L1110.5,230.5 L1115.5,225.5 L1120.5,222.5 L1125.5,221.5 L1130.5,220.5 L1135.5,222.5 L1140.5,223.5 L1145.5,226.5 L1150.5,230.5 L1155.5,235.5 L1160.5,239.5 L1165.5,247.5 L1170.5,255.5 L1175.5,263.5 L1180.5,271.5 L1185.5,284.5 L1190.5,296.5 L1195.5,305.5 L1200.5,315.5 L1205.5,320.5 L1210.5,322.5 L1215.5,321.5 L1220.5,322.5 L1225.5,323.5 L1230.5,324.5 L1235.5,325.5 L1240.5,328.5 L1245.5,331.5 L1250.5,333.5 L1255.5,332.5 L1260.5,332.5 L1265.5,332.5 L1270.5,331.5 L1275.5,330.5 L1280.5,330.5 L1285.5,331.5 L1290.5,333.5 L1295.5,336.5 L1300.5,342.5 L1305.5,345.5 L1310.5,345.5 L1315.5,345.5 L1320.5,347.5 L1325.5,347.5 L1330.5,347.5 L1335.5,344.5 L1340.5,344.5 L1345.5,341.5 L1350.5,341.5 L1355.5,342.5 L1360.5,342.5 L1365.5,343.5 L1370.5,341.5 L1375.5,342.5 L1380.5,341.5 L1385.5,339.5 L1390.5,335.5 L1395.5,332.5 L1400.5,332.5 L1405.5,333.5 L1410.5,335.5 L1415.5,337.5 L1420.5,337.5 L1425.5,337.5 L1430.5,335.5 L1435.5,335.5 L1440.5,335.5 L1445.5,335.5 L1450.5,334.5 L1455.5,334.5 L1460.5,333.5 L1465.5,332.5 L1470.5,332.5 L1475.5,331.5 L1480.5,330.5 L1485.5,333.5 L1490.5,339.5 L1495.5,345.5 L1500.5,348.5 L1505.5,348.5" stroke="#e65000" stroke-width="1" fill="none" stroke-linejoin="round" shape-rendering="crispEdges"/><path d="M105.5,317.5 L110.5,317.5 L115.5,315.5 L120.5,312.5 L125.5,312.5 L130.5,312.5 L135.5,313.5 L140.5,314.5 L145.5,315.5 L150.5,316.5 L155.5,317.5 L160.5,317.5 L165.5,318.5 L170.5,321.5 L175.5,324.5 L180.5,327.5 L185.5,327.5 L190.5,327.5 L195.5,327.5 L200.5,328.5 L205.5,330.5 L210.5,331.5 L215.5,332.5 L220.5,332.5 L225.5,333.5 L230.5,333.5 L235.5,334.5 L240.5,333.5 L245.5,334.5 L250.5,333.5 L255.5,331.5 L260.5,328.5 L265.5,325.5 L270.5,318.5 L275.5,309.5 L280.5,298.5 L285.5,290.5 L290.5,287.5 L295.5,284.5 L300.5,282.5 L305.5,281.5 L310.5,280.5 L315.5,276.5 L320.5,274.5 L325.5,270.5 L330.5,266.5 L335.5,265.5 L340.5,264.5 L345.5,264.5 L350.5,263.5 L355.5,261.5 L360.5,260.5 L365.5,259.5 L370.5,254.5 L375.5,250.5 L380.5,250.5 L385.5,249.5 L390.5,249.5 L395.5,247.5 L400.5,247.5 L405.5,247.5 L410.5,247.5 L415.5,247.5 L420.5,246.5 L425.5,246.5 L430.5,245.5 L435.5,244.5 L440.5,243.5 L445.5,243.5 L450.5,242.5 L455.5,242.5 L460.5,241.5 L465.5,240.5 L470.5,242.5 L475.5,241.5 L480.5,241.5 L485.5,240.5 L490.5,240.5 L495.5,241.5 L500.5,241.5 L505.5,242.5 L510.5,242.5 L515.5,243.5 L520.5,244.5 L525.5,246.5 L530.5,247.5 L535.5,248.5 L540.5,246.5 L545.5,244.5 L550.5,243.5 L555.5,242.5 L560.5,242.5 L565.5,240.5 L570.5,235.5 L575.5,231.5 L580.5,229.5 L585.5,227.5 L590.5,228.5 L595.5,228.5 L600.5,229.5 L605.5,231.5 L610.5,236.5 L615.5,258.5 L620.5,302.5 L625.5,320.5 L630.5,337.5 L635.5,347.5 L640.5,351.5 L645.5,357.5 L650.5,362.5 L655.5,365.5 L660.5,368.5 L665.5,371.5 L670.5,370.5 L675.5,370.5 L680.5,368.5 L685.5,365.5 L690.5,364.5 L695.5,360.5 L700.5,355.5 L705.5,349.5 L710.5,345.5 L715.5,345.5 L720.5,329.5 L725.5,323.5 L730.5,312.5 L735.5,305.5 L740.5,307.5 L745.5,306.5 L750.5,304.5 L755.5,303.5 L760.5,302.5 L765.5,300.5 L770.5,300.5 L775.5,301.5 L780.5,305.5 L785.5,305.5 L790.5,305.5 L795.5,304.5 L800.5,304.5 L805.5,304.5 L810.5,304.5 L815.5,304.5 L820.5,305.5 L825.5,305.5 L830.5,305.5 L835.5,304.5 L840.5,304.5 L845.5,305.5 L850.5,308.5 L855.5,309.5 L860.5,310.5 L865.5,310.5 L870.5,310.5 L875.5,310.5 L880.5,308.5 L885.5,308.5 L890.5,310.5 L895.5,311.5 L900.5,309.5 L905.5,309.5 L910.5,309.5 L915.5,310.5 L920.5,310.5 L925.5,310.5 L930.5,311.5 L935.5,312.5 L940.5,313.5 L945.5,314.5 L950.5,313.5 L955.5,313.5 L960.5,314.5 L965.5,314.5 L970.5,313.5 L975.5,315.5 L980.5,316.5 L985.5,317.5 L990.5,318.5 L995.5,319.5 L1000.5,320.5 L1005.5,320.5 L1010.5,320.5 L1015.5,319.5 L1020.5,318.5 L1025.5,316.5 L1030.5,312.5 L1035.5,307.5 L1040.5,300.5 L1045.5,295.5 L1050.5,292.5 L1055.5,289.5 L1060.5,286.5 L1065.5,281.5 L1070.5,276.5 L1075.5,274.5 L1080.5,274.5 L1085.5,272.5 L1090.5,274.5 L1095.5,280.5 L1100.5,285.5 L1105.5,297.5 L1110.5,310.5 L1115.5,324.5 L1120.5,334.5 L1125.5,343.5 L1130.5,351.5 L1135.5,356.5 L1140.5,361.5 L1145.5,364.5 L1150.5,369.5 L1155.5,375.5 L1160.5,382.5 L1165.5,384.5 L1170.5,387.5 L1175.5,388.5 L1180.5,388.5 L1185.5,384.5 L1190.5,378.5 L1195.5,374.5 L1200.5,368.5 L1205.5,366.5 L1210.5,367.5 L1215.5,370.5 L1220.5,371.5 L1225.5,372.5 L1230.5,373.5 L1235.5,375.5 L1240.5,376.5 L1245.5,378.5 L1250.5,378.5 L1255.5,378.5 L1260.5,377.5 L1265.5,377.5 L1270.5,378.5 L1275.5,383.5 L1280.5,384.5 L1285.5,385.5 L1290.5,385.5 L1295.5,384.5 L1300.5,382.5 L1305.5,383.5 L1310.5,386.5 L1315.5,386.5 L1320.5,386.5 L1325.5,386.5 L1330.5,386.5 L1335.5,386.5 L1340.5,386.5 L1345.5,386.5 L1350.5,386.5 L1355.5,385.5 L1360.5,385.5 L1365.5,385.5 L1370.5,385.5 L1375.5,381.5 L1380.5,380.5 L1385.5,381.5 L1390.5,382.5 L1395.5,382.5 L1400.5,381.5 L1405.5,378.5 L1410.5,372.5 L1415.5,369.5 L1420.5,368.5 L1425.5,369.5 L1430.5,372.5 L1435.5,375.5 L1440.5,376.5 L1445.5,378.5 L1450.5,381.5 L1455.5,384.5 L1460.5,387.5 L1465.5,391.5 L1470.5,395.5 L1475.5,401.5 L1480.5,406.5 L1485.5,407.5 L1490.5,406.5 L1495.5,404.5 L1500.5,403.5 L1505.5,403.5" stroke="#0064dc" stroke-width="1" fill="none" stroke-linejoin="round" shape-rendering="crispEdges"/><path d="M55.5,299.5 L60.5,298.5 L65.5,296.5 L70.5,295.5 L75.5,296.5 L80.5,297.5 L85.5,298.5 L90.5,297.5 L95.5,297.5 L100.5,296.5 L105.5,297.5 L110.5,298.5 L115.5,298.5 L120.5,297.5 L125.5,296.5 L130.5,295.5 L135.5,296.5 L140.5,299.5 L145.5,301.5 L150.5,302.5 L155.5,303.5 L160.5,303.5 L165.5,304.5 L170.5,307.5 L175.5,309.5 L180.5,312.5 L185.5,312.5 L190.5,310.5 L195.5,308.5 L200.5,305.5 L205.5,302.5 L210.5,298.5 L215.5,295.5 L220.5,290.5 L225.5,285.5 L230.5,280.5 L235.5,275.5 L240.5,272.5 L245.5,269.5 L250.5,267.5 L255.5,265.5 L260.5,263.5 L265.5,260.5 L270.5,259.5 L275.5,258.5 L280.5,255.5 L285.5,254.5 L290.5,253.5 L295.5,253.5 L300.5,252.5 L305.5,250.5 L310.5,249.5 L315.5,247.5 L320.5,244.5 L325.5,242.5 L330.5,241.5 L335.5,240.5 L340.5,239.5 L345.5,237.5 L350.5,236.5 L355.5,236.5 L360.5,235.5 L365.5,235.5 L370.5,235.5 L375.5,236.5 L380.5,235.5 L385.5,234.5 L390.5,232.5 L395.5,231.5 L400.5,229.5 L405.5,228.5 L410.5,226.5 L415.5,224.5 L420.5,223.5 L425.5,221.5 L430.5,220.5 L435.5,219.5 L440.5,221.5 L445.5,223.5 L450.5,223.5 L455.5,224.5 L460.5,225.5 L465.5,226.5 L470.5,228.5 L475.5,230.5 L480.5,231.5 L485.5,231.5 L490.5,229.5 L495.5,227.5 L500.5,225.5 L505.5,224.5 L510.5,223.5 L515.5,220.5 L520.5,216.5 L525.5,212.5 L530.5,209.5 L535.5,206.5 L540.5,203.5 L545.5,202.5 L550.5,203.5 L555.5,204.5 L560.5,205.5 L565.5,206.5 L570.5,206.5 L575.5,208.5 L580.5,210.5 L585.5,211.5 L590.5,214.5 L595.5,215.5 L600.5,215.5 L605.5,215.5 L610.5,217.5 L615.5,225.5 L620.5,242.5 L625.5,253.5 L630.5,265.5 L635.5,277.5 L640.5,284.5 L645.5,292.5 L650.5,301.5 L655.5,308.5 L660.5,314.5 L665.5,315.5 L670.5,306.5 L675.5,301.5 L680.5,295.5 L685.5,291.5 L690.5,291.5 L695.5,290.5 L700.5,289.5 L705.5,287.5 L710.5,285.5 L715.5,285.5 L720.5,285.5 L725.5,286.5 L730.5,287.5 L735.5,288.5 L740.5,289.5 L745.5,289.5 L750.5,289.5 L755.5,289.5 L760.5,290.5 L765.5,290.5 L770.5,289.5 L775.5,288.5 L780.5,285.5 L785.5,282.5 L790.5,279.5 L795.5,277.5 L800.5,276.5 L805.5,276.5 L810.5,276.5 L815.5,276.5 L820.5,277.5 L825.5,279.5 L830.5,282.5 L835.5,284.5 L840.5,287.5 L845.5,289.5 L850.5,293.5 L855.5,294.5 L860.5,295.5 L865.5,295.5 L870.5,294.5 L875.5,293.5 L880.5,294.5 L885.5,295.5 L890.5,295.5 L895.5,296.5 L900.5,295.5 L905.5,296.5 L910.5,297.5 L915.5,297.5 L920.5,298.5 L925.5,299.5 L930.5,300.5 L935.5,301.5 L940.5,302.5 L945.5,301.5 L950.5,300.5 L955.5,299.5 L960.5,298.5 L965.5,297.5 L970.5,296.5 L975.5,294.5 L980.5,291.5 L985.5,287.5 L990.5,283.5 L995.5,278.5 L1000.5,275.5 L1005.5,271.5 L1010.5,268.5 L1015.5,264.5 L1020.5,262.5 L1025.5,260.5 L1030.5,259.5 L1035.5,258.5 L1040.5,259.5 L1045.5,259.5 L1050.5,260.5 L1055.5,259.5 L1060.5,260.5 L1065.5,260.5 L1070.5,259.5 L1075.5,259.5 L1080.5,260.5 L1085.5,260.5 L1090.5,261.5 L1095.5,264.5 L1100.5,266.5 L1105.5,273.5 L1110.5,280.5 L1115.5,289.5 L1120.5,297.5 L1125.5,304.5 L1130.5,311.5 L1135.5,317.5 L1140.5,323.5 L1145.5,327.5 L1150.5,333.5 L1155.5,337.5 L1160.5,341.5 L1165.5,342.5 L1170.5,345.5 L1175.5,347.5 L1180.5,348.5 L1185.5,350.5 L1190.5,351.5 L1195.5,352.5 L1200.5,351.5 L1205.5,349.5 L1210.5,348.5 L1215.5,349.5 L1220.5,348.5 L1225.5,348.5 L1230.5,348.5 L1235.5,351.5 L1240.5,354.5 L1245.5,357.5 L1250.5,360.5 L1255.5,361.5 L1260.5,361.5 L1265.5,360.5 L1270.5,362.5 L1275.5,365.5 L1280.5,366.5 L1285.5,365.5 L1290.5,364.5 L1295.5,363.5 L1300.5,364.5 L1305.5,367.5 L1310.5,370.5 L1315.5,372.5 L1320.5,371.5 L1325.5,368.5 L1330.5,367.5 L1335.5,365.5 L1340.5,365.5 L1345.5,364.5 L1350.5,362.5 L1355.5,360.5 L1360.5,357.5 L1365.5,356.5 L1370.5,354.5 L1375.5,355.5 L1380.5,355.5 L1385.5,354.5 L1390.5,352.5 L1395.5,351.5 L1400.5,350.5 L1405.5,351.5 L1410.5,350.5 L1415.5,350.5 L1420.5,351.5 L1425.5,351.5 L1430.5,353.5 L1435.5,356.5 L1440.5,359.5 L1445.5,363.5 L1450.5,366.5 L1455.5,367.5 L1460.5,370.5 L1465.5,373.5 L1470.5,376.5 L1475.5,380.5 L1480.5,383.5 L1485.5,384.5 L1490.5,386.5 L1495.5,386.5 L1500.5,385.5 L1505.5,384.5" stroke="#ff8c00" stroke-width="1" fill="none" stroke-linejoin="round" shape-rendering="crispEdges"/><path d="M30.5,306.5 L35.5,302.5 L40.5,297.5 L45.5,293.5 L50.5,293.5 L55.5,292.5 L60.5,294.5 L65.5,295.5 L70.5,298.5 L75.5,299.5 L80.5,303.5 L85.5,303.5 L90.5,300.5 L95.5,295.5 L100.5,292.5 L105.5,292.5 L110.5,294.5 L115.5,296.5 L120.5,299.5 L125.5,300.5 L130.5,298.5 L135.5,298.5 L140.5,302.5 L145.5,303.5 L150.5,304.5 L155.5,307.5 L160.5,307.5 L165.5,307.5 L170.5,310.5 L175.5,314.5 L180.5,317.5 L185.5,317.5 L190.5,313.5 L195.5,305.5 L200.5,296.5 L205.5,286.5 L210.5,278.5 L215.5,277.5 L220.5,276.5 L225.5,274.5 L230.5,275.5 L235.5,272.5 L240.5,267.5 L245.5,263.5 L250.5,259.5 L255.5,255.5 L260.5,255.5 L265.5,253.5 L270.5,256.5 L275.5,257.5 L280.5,255.5 L285.5,253.5 L290.5,253.5 L295.5,250.5 L300.5,246.5 L305.5,245.5 L310.5,244.5 L315.5,242.5 L320.5,238.5 L325.5,237.5 L330.5,237.5 L335.5,236.5 L340.5,237.5 L345.5,236.5 L350.5,236.5 L355.5,236.5 L360.5,235.5 L365.5,234.5 L370.5,234.5 L375.5,236.5 L380.5,234.5 L385.5,234.5 L390.5,230.5 L395.5,227.5 L400.5,223.5 L405.5,221.5 L410.5,218.5 L415.5,218.5 L420.5,219.5 L425.5,219.5 L430.5,219.5 L435.5,221.5 L440.5,225.5 L445.5,227.5 L450.5,228.5 L455.5,230.5 L460.5,229.5 L465.5,228.5 L470.5,230.5 L475.5,233.5 L480.5,232.5 L485.5,232.5 L490.5,229.5 L495.5,224.5 L500.5,218.5 L505.5,216.5 L510.5,213.5 L515.5,211.5 L520.5,208.5 L525.5,205.5 L530.5,202.5 L535.5,198.5 L540.5,196.5 L545.5,197.5 L550.5,201.5 L555.5,207.5 L560.5,212.5 L565.5,216.5 L570.5,214.5 L575.5,215.5 L580.5,213.5 L585.5,211.5 L590.5,213.5 L595.5,216.5 L600.5,215.5 L605.5,217.5 L610.5,224.5 L615.5,238.5 L620.5,268.5 L625.5,291.5 L630.5,313.5 L635.5,329.5 L640.5,329.5 L645.5,316.5 L650.5,311.5 L655.5,302.5 L660.5,298.5 L665.5,300.5 L670.5,296.5 L675.5,291.5 L680.5,288.5 L685.5,285.5 L690.5,283.5 L695.5,285.5 L700.5,287.5 L705.5,286.5 L710.5,286.5 L715.5,287.5 L720.5,286.5 L725.5,285.5 L730.5,288.5 L735.5,290.5 L740.5,292.5 L745.5,293.5 L750.5,292.5 L755.5,291.5 L760.5,289.5 L765.5,287.5 L770.5,286.5 L775.5,283.5 L780.5,278.5 L785.5,275.5 L790.5,271.5 L795.5,269.5 L800.5,269.5 L805.5,274.5 L810.5,277.5 L815.5,281.5 L820.5,285.5 L825.5,288.5 L830.5,290.5 L835.5,291.5 L840.5,292.5 L845.5,293.5 L850.5,297.5 L855.5,298.5 L860.5,298.5 L865.5,298.5 L870.5,294.5 L875.5,290.5 L880.5,290.5 L885.5,291.5 L890.5,293.5 L895.5,297.5 L900.5,301.5 L905.5,302.5 L910.5,302.5 L915.5,301.5 L920.5,299.5 L925.5,297.5 L930.5,298.5 L935.5,301.5 L940.5,302.5 L945.5,304.5 L950.5,303.5 L955.5,300.5 L960.5,294.5 L965.5,291.5 L970.5,288.5 L975.5,286.5 L980.5,282.5 L985.5,280.5 L990.5,274.5 L995.5,269.5 L1000.5,264.5 L1005.5,260.5 L1010.5,256.5 L1015.5,254.5 L1020.5,255.5 L1025.5,256.5 L1030.5,258.5 L1035.5,261.5 L1040.5,264.5 L1045.5,263.5 L1050.5,263.5 L1055.5,260.5 L1060.5,259.5 L1065.5,255.5 L1070.5,255.5 L1075.5,256.5 L1080.5,261.5 L1085.5,262.5 L1090.5,266.5 L1095.5,272.5 L1100.5,277.5 L1105.5,285.5 L1110.5,299.5 L1115.5,312.5 L1120.5,321.5 L1125.5,331.5 L1130.5,336.5 L1135.5,336.5 L1140.5,334.5 L1145.5,333.5 L1150.5,334.5 L1155.5,338.5 L1160.5,345.5 L1165.5,350.5 L1170.5,357.5 L1175.5,360.5 L1180.5,358.5 L1185.5,355.5 L1190.5,351.5 L1195.5,346.5 L1200.5,342.5 L1205.5,340.5 L1210.5,341.5 L1215.5,346.5 L1220.5,350.5 L1225.5,354.5 L1230.5,357.5 L1235.5,361.5 L1240.5,361.5 L1245.5,365.5 L1250.5,366.5 L1255.5,364.5 L1260.5,361.5 L1265.5,359.5 L1270.5,359.5 L1275.5,363.5 L1280.5,368.5 L1285.5,369.5 L1290.5,370.5 L1295.5,368.5 L1300.5,365.5 L1305.5,367.5 L1310.5,371.5 L1315.5,374.5 L1320.5,375.5 L1325.5,371.5 L1330.5,367.5 L1335.5,360.5 L1340.5,356.5 L1345.5,352.5 L1350.5,353.5 L1355.5,353.5 L1360.5,355.5 L1365.5,356.5 L1370.5,356.5 L1375.5,356.5 L1380.5,356.5 L1385.5,353.5 L1390.5,347.5 L1395.5,345.5 L1400.5,344.5 L1405.5,346.5 L1410.5,348.5 L1415.5,352.5 L1420.5,357.5 L1425.5,358.5 L1430.5,360.5 L1435.5,365.5 L1440.5,367.5 L1445.5,369.5 L1450.5,373.5 L1455.5,373.5 L1460.5,375.5 L1465.5,379.5 L1470.5,383.5 L1475.5,387.5 L1480.5,392.5 L1485.5,394.5 L1490.5,392.5 L1495.5,390.5 L1500.5,383.5 L1505.5,376.5" stroke="#00f000" stroke-width="1" fill="none" stroke-linejoin="round" shape-rendering="crispEdges"/><path d="M11 463.5H1506" stroke="#e65000" stroke-width="1" shape-rendering="crispEdges"/><path d="M105.5,466.5 L110.5,466.5 L115.5,461.5 L120.5,464.5 L125.5,464.5 L130.5,462.5 L135.5,467.5 L140.5,467.5 L145.5,465.5 L150.5,466.5 L155.5,467.5 L160.5,466.5 L165.5,466.5 L170.5,470.5 L175.5,472.5 L180.5,471.5 L185.5,465.5 L190.5,456.5 L195.5,454.5 L200.5,455.5 L205.5,452.5 L210.5,452.5 L215.5,456.5 L220.5,453.5 L225.5,454.5 L230.5,455.5 L235.5,449.5 L240.5,450.5 L245.5,449.5 L250.5,452.5 L255.5,452.5 L260.5,454.5 L265.5,452.5 L270.5,459.5 L275.5,459.5 L280.5,455.5 L285.5,456.5 L290.5,458.5 L295.5,459.5 L300.5,456.5 L305.5,456.5 L310.5,458.5 L315.5,457.5 L320.5,457.5 L325.5,458.5 L330.5,458.5 L335.5,459.5 L340.5,462.5 L345.5,458.5 L350.5,459.5 L355.5,460.5 L360.5,459.5 L365.5,461.5 L370.5,461.5 L375.5,464.5 L380.5,460.5 L385.5,461.5 L390.5,457.5 L395.5,457.5 L400.5,458.5 L405.5,459.5 L410.5,457.5 L415.5,460.5 L420.5,460.5 L425.5,460.5 L430.5,460.5 L435.5,463.5 L440.5,467.5 L445.5,465.5 L450.5,462.5 L455.5,464.5 L460.5,462.5 L465.5,465.5 L470.5,468.5 L475.5,468.5 L480.5,463.5 L485.5,463.5 L490.5,460.5 L495.5,459.5 L500.5,458.5 L505.5,459.5 L510.5,459.5 L515.5,456.5 L520.5,456.5 L525.5,454.5 L530.5,454.5 L535.5,454.5 L540.5,455.5 L545.5,461.5 L550.5,464.5 L555.5,467.5 L560.5,465.5 L565.5,462.5 L570.5,460.5 L575.5,467.5 L580.5,464.5 L585.5,462.5 L590.5,467.5 L595.5,466.5 L600.5,465.5 L605.5,468.5 L610.5,473.5 L615.5,489.5 L620.5,513.5 L625.5,498.5 L630.5,499.5 L635.5,490.5 L640.5,478.5 L645.5,481.5 L650.5,479.5 L655.5,475.5 L660.5,475.5 L665.5,474.5 L670.5,466.5 L675.5,464.5 L680.5,463.5 L685.5,462.5 L690.5,464.5 L695.5,463.5 L700.5,461.5 L705.5,455.5 L710.5,456.5 L715.5,461.5 L720.5,459.5 L725.5,460.5 L730.5,463.5 L735.5,465.5 L740.5,468.5 L745.5,463.5 L750.5,461.5 L755.5,461.5 L760.5,462.5 L765.5,466.5 L770.5,461.5 L775.5,457.5 L780.5,453.5 L785.5,457.5 L790.5,459.5 L795.5,459.5 L800.5,458.5 L805.5,462.5 L810.5,465.5 L815.5,468.5 L820.5,466.5 L825.5,464.5 L830.5,465.5 L835.5,466.5 L840.5,470.5 L845.5,469.5 L850.5,470.5 L855.5,466.5 L860.5,466.5 L865.5,468.5 L870.5,462.5 L875.5,461.5 L880.5,466.5 L885.5,467.5 L890.5,469.5 L895.5,467.5 L900.5,466.5 L905.5,465.5 L910.5,464.5 L915.5,465.5 L920.5,462.5 L925.5,462.5 L930.5,466.5 L935.5,468.5 L940.5,467.5 L945.5,464.5 L950.5,459.5 L955.5,460.5 L960.5,458.5 L965.5,461.5 L970.5,459.5 L975.5,455.5 L980.5,455.5 L985.5,454.5 L990.5,452.5 L995.5,452.5 L1000.5,450.5 L1005.5,451.5 L1010.5,450.5 L1015.5,453.5 L1020.5,458.5 L1025.5,457.5 L1030.5,459.5 L1035.5,459.5 L1040.5,462.5 L1045.5,460.5 L1050.5,460.5 L1055.5,457.5 L1060.5,460.5 L1065.5,459.5 L1070.5,462.5 L1075.5,466.5 L1080.5,468.5 L1085.5,464.5 L1090.5,468.5 L1095.5,473.5 L1100.5,472.5 L1105.5,481.5 L1110.5,485.5 L1115.5,488.5 L1120.5,484.5 L1125.5,484.5 L1130.5,484.5 L1135.5,478.5 L1140.5,477.5 L1145.5,476.5 L1150.5,479.5 L1155.5,484.5 L1160.5,484.5 L1165.5,479.5 L1170.5,480.5 L1175.5,474.5 L1180.5,472.5 L1185.5,469.5 L1190.5,464.5 L1195.5,463.5 L1200.5,459.5 L1205.5,462.5 L1210.5,467.5 L1215.5,472.5 L1220.5,466.5 L1225.5,465.5 L1230.5,467.5 L1235.5,472.5 L1240.5,469.5 L1245.5,471.5 L1250.5,465.5 L1255.5,460.5 L1260.5,465.5 L1265.5,464.5 L1270.5,470.5 L1275.5,475.5 L1280.5,467.5 L1285.5,466.5 L1290.5,463.5 L1295.5,464.5 L1300.5,467.5 L1305.5,469.5 L1310.5,471.5 L1315.5,466.5 L1320.5,463.5 L1325.5,458.5 L1330.5,458.5 L1335.5,457.5 L1340.5,459.5 L1345.5,456.5 L1350.5,460.5 L1355.5,459.5 L1360.5,462.5 L1365.5,462.5 L1370.5,457.5 L1375.5,460.5 L1380.5,461.5 L1385.5,455.5 L1390.5,453.5 L1395.5,455.5 L1400.5,460.5 L1405.5,467.5 L1410.5,462.5 L1415.5,464.5 L1420.5,467.5 L1425.5,464.5 L1430.5,472.5 L1435.5,471.5 L1440.5,467.5 L1445.5,469.5 L1450.5,472.5 L1455.5,470.5 L1460.5,473.5 L1465.5,474.5 L1470.5,474.5 L1475.5,478.5 L1480.5,477.5 L1485.5,471.5 L1490.5,465.5 L1495.5,465.5 L1500.5,460.5 L1505.5,458.5" stroke="#009632" stroke-width="1" fill="none" stroke-linejoin="round" shape-rendering="crispEdges"/><path d="M65.5,592.5 L70.5,592.5 L75.5,592.5 L80.5,592.5 L85.5,592.5 L90.5,582.5 L95.5,592.5 L100.5,592.5 L105.5,592.5 L110.5,582.5 L115.5,582.5 L120.5,582.5 L125.5,592.5 L130.5,582.5 L135.5,592.5 L140.5,592.5 L145.5,592.5 L150.5,602.5 L155.5,602.5 L160.5,592.5 L165.5,592.5 L170.5,602.5 L175.5,612.5 L180.5,602.5 L185.5,592.5 L190.5,592.5 L195.5,582.5 L200.5,582.5 L205.5,582.5 L210.5,572.5 L215.5,572.5 L220.5,572.5 L225.5,572.5 L230.5,562.5 L235.5,552.5 L240.5,552.5 L245.5,552.5 L250.5,562.5 L255.5,562.5 L260.5,562.5 L265.5,562.5 L270.5,572.5 L275.5,562.5 L280.5,562.5 L285.5,552.5 L290.5,562.5 L295.5,572.5 L300.5,572.5 L305.5,572.5 L310.5,572.5 L315.5,572.5 L320.5,562.5 L325.5,572.5 L330.5,562.5 L335.5,572.5 L340.5,582.5 L345.5,582.5 L350.5,582.5 L355.5,582.5 L360.5,582.5 L365.5,592.5 L370.5,582.5 L375.5,592.5 L380.5,592.5 L385.5,592.5 L390.5,592.5 L395.5,582.5 L400.5,582.5 L405.5,582.5 L410.5,572.5 L415.5,572.5 L420.5,572.5 L425.5,562.5 L430.5,562.5 L435.5,562.5 L440.5,572.5 L445.5,562.5 L450.5,562.5 L455.5,572.5 L460.5,562.5 L465.5,572.5 L470.5,582.5 L475.5,572.5 L480.5,572.5 L485.5,582.5 L490.5,582.5 L495.5,572.5 L500.5,562.5 L505.5,572.5 L510.5,582.5 L515.5,572.5 L520.5,572.5 L525.5,562.5 L530.5,552.5 L535.5,552.5 L540.5,552.5 L545.5,552.5 L550.5,562.5 L555.5,572.5 L560.5,572.5 L565.5,562.5 L570.5,552.5 L575.5,562.5 L580.5,562.5 L585.5,562.5 L590.5,572.5 L595.5,572.5 L600.5,572.5 L605.5,572.5 L610.5,572.5 L615.5,572.5 L620.5,582.5 L625.5,582.5 L630.5,592.5 L635.5,582.5 L640.5,582.5 L645.5,592.5 L650.5,592.5 L655.5,592.5 L660.5,602.5 L665.5,602.5 L670.5,592.5 L675.5,582.5 L680.5,582.5 L685.5,582.5 L690.5,582.5 L695.5,592.5 L700.5,592.5 L705.5,582.5 L710.5,582.5 L715.5,592.5 L720.5,582.5 L725.5,572.5 L730.5,582.5 L735.5,592.5 L740.5,592.5 L745.5,592.5 L750.5,582.5 L755.5,582.5 L760.5,592.5 L765.5,602.5 L770.5,592.5 L775.5,582.5 L780.5,582.5 L785.5,592.5 L790.5,592.5 L795.5,582.5 L800.5,572.5 L805.5,582.5 L810.5,592.5 L815.5,592.5 L820.5,582.5 L825.5,572.5 L830.5,582.5 L835.5,592.5 L840.5,602.5 L845.5,592.5 L850.5,592.5 L855.5,592.5 L860.5,602.5 L865.5,602.5 L870.5,592.5 L875.5,582.5 L880.5,592.5 L885.5,602.5 L890.5,602.5 L895.5,592.5 L900.5,582.5 L905.5,582.5 L910.5,572.5 L915.5,582.5 L920.5,572.5 L925.5,562.5 L930.5,572.5 L935.5,582.5 L940.5,572.5 L945.5,562.5 L950.5,552.5 L955.5,562.5 L960.5,562.5 L965.5,572.5 L970.5,572.5 L975.5,562.5 L980.5,562.5 L985.5,562.5 L990.5,552.5 L995.5,542.5 L1000.5,542.5 L1005.5,552.5 L1010.5,552.5 L1015.5,552.5 L1020.5,562.5 L1025.5,552.5 L1030.5,562.5 L1035.5,562.5 L1040.5,572.5 L1045.5,572.5 L1050.5,572.5 L1055.5,572.5 L1060.5,582.5 L1065.5,572.5 L1070.5,582.5 L1075.5,582.5 L1080.5,582.5 L1085.5,582.5 L1090.5,582.5 L1095.5,592.5 L1100.5,582.5 L1105.5,592.5 L1110.5,602.5 L1115.5,612.5 L1120.5,602.5 L1125.5,612.5 L1130.5,612.5 L1135.5,602.5 L1140.5,592.5 L1145.5,602.5 L1150.5,602.5 L1155.5,602.5 L1160.5,612.5 L1165.5,602.5 L1170.5,602.5 L1175.5,592.5 L1180.5,592.5 L1185.5,582.5 L1190.5,572.5 L1195.5,572.5 L1200.5,572.5 L1205.5,572.5 L1210.5,572.5 L1215.5,572.5 L1220.5,562.5 L1225.5,562.5 L1230.5,562.5 L1235.5,572.5 L1240.5,572.5 L1245.5,582.5 L1250.5,582.5 L1255.5,582.5 L1260.5,592.5 L1265.5,582.5 L1270.5,582.5 L1275.5,582.5 L1280.5,582.5 L1285.5,582.5 L1290.5,572.5 L1295.5,572.5 L1300.5,582.5 L1305.5,582.5 L1310.5,592.5 L1315.5,592.5 L1320.5,582.5 L1325.5,582.5 L1330.5,582.5 L1335.5,572.5 L1340.5,582.5 L1345.5,582.5 L1350.5,592.5 L1355.5,582.5 L1360.5,582.5 L1365.5,582.5 L1370.5,572.5 L1375.5,582.5 L1380.5,592.5 L1385.5,592.5 L1390.5,582.5 L1395.5,592.5 L1400.5,592.5 L1405.5,602.5 L1410.5,592.5 L1415.5,602.5 L1420.5,602.5 L1425.5,592.5 L1430.5,602.5 L1435.5,592.5 L1440.5,582.5 L1445.5,592.5 L1450.5,602.5 L1455.5,592.5 L1460.5,592.5 L1465.5,592.5 L1470.5,602.5 L1475.5,602.5 L1480.5,602.5 L1485.5,602.5 L1490.5,592.5 L1495.5,602.5 L1500.5,602.5 L1505.5,592.5" stroke="#009632" stroke-width="1" fill="none" stroke-linejoin="round" shape-rendering="crispEdges"/><path d="M11 552.5H1506" stroke="#0064dc" stroke-width="1" shape-rendering="crispEdges"/><path d="M11 612.5H1506" stroke="#e65000" stroke-width="1" shape-rendering="crispEdges"/><path d="M25 658h1v1h-1zM30 657h1v2h-1zM35 656h1v3h-1zM40 655h1v4h-1zM45 655h1v4h-1zM50 656h1v3h-1zM55 656h1v3h-1zM60 657h1v2h-1zM65 657h1v2h-1zM90 658h1v1h-1zM95 657h1v2h-1zM100 658h1v1h-1zM190 658h1v1h-1zM195 656h1v3h-1zM200 655h1v4h-1zM205 653h1v6h-1zM210 653h1v6h-1zM215 653h1v6h-1zM220 653h1v6h-1zM225 654h1v5h-1zM230 655h1v4h-1zM235 654h1v5h-1zM240 654h1v5h-1zM245 653h1v6h-1zM250 654h1v5h-1zM255 655h1v4h-1zM260 655h1v4h-1zM265 656h1v3h-1zM270 657h1v2h-1zM275 658h1v1h-1zM280 658h1v1h-1zM285 658h1v1h-1zM290 658h1v1h-1zM295 658h1v1h-1zM300 658h1v1h-1zM305 658h1v1h-1zM310 658h1v1h-1zM315 658h1v1h-1zM320 658h1v1h-1zM325 658h1v1h-1zM330 658h1v1h-1zM395 658h1v1h-1zM400 658h1v1h-1zM405 658h1v1h-1zM410 658h1v1h-1zM415 658h1v1h-1zM495 658h1v1h-1zM500 657h1v2h-1zM505 657h1v2h-1zM510 657h1v2h-1zM515 656h1v3h-1zM520 656h1v3h-1zM525 656h1v3h-1zM530 655h1v4h-1zM535 655h1v4h-1zM540 656h1v3h-1zM545 657h1v2h-1zM670 657h1v2h-1zM675 654h1v5h-1zM680 653h1v6h-1zM685 653h1v6h-1zM690 653h1v6h-1zM695 653h1v6h-1zM700 654h1v5h-1zM705 653h1v6h-1zM710 653h1v6h-1zM715 654h1v5h-1zM720 654h1v5h-1zM725 654h1v5h-1zM730 655h1v4h-1zM735 656h1v3h-1zM740 657h1v2h-1zM745 657h1v2h-1zM750 656h1v3h-1zM755 655h1v4h-1zM760 655h1v4h-1zM765 656h1v3h-1zM770 656h1v3h-1zM775 655h1v4h-1zM780 653h1v6h-1zM785 653h1v6h-1zM790 654h1v5h-1zM795 655h1v4h-1zM800 655h1v4h-1zM805 656h1v3h-1zM810 658h1v1h-1zM870 658h1v1h-1zM875 657h1v2h-1zM880 658h1v1h-1zM885 658h1v1h-1zM920 658h1v1h-1zM925 658h1v1h-1zM930 658h1v1h-1zM950 658h1v1h-1zM955 657h1v2h-1zM960 656h1v3h-1zM965 656h1v3h-1zM970 656h1v3h-1zM975 655h1v4h-1zM980 654h1v5h-1zM985 654h1v5h-1zM990 653h1v6h-1zM995 653h1v6h-1zM1000 653h1v6h-1zM1005 653h1v6h-1zM1010 653h1v6h-1zM1015 653h1v6h-1zM1020 655h1v4h-1zM1025 656h1v3h-1zM1030 658h1v1h-1zM1035 658h1v1h-1zM1065 658h1v1h-1zM1185 658h1v1h-1zM1190 657h1v2h-1zM1195 655h1v4h-1zM1200 654h1v5h-1zM1205 654h1v5h-1zM1210 655h1v4h-1zM1215 657h1v2h-1zM1220 657h1v2h-1zM1225 656h1v3h-1zM1230 657h1v2h-1zM1235 658h1v1h-1zM1240 658h1v1h-1zM1250 658h1v1h-1zM1255 656h1v3h-1zM1260 656h1v3h-1zM1265 656h1v3h-1zM1270 657h1v2h-1zM1275 658h1v1h-1zM1280 658h1v1h-1zM1285 657h1v2h-1zM1290 657h1v2h-1zM1295 656h1v3h-1zM1300 657h1v2h-1zM1305 658h1v1h-1zM1310 658h1v1h-1zM1315 658h1v1h-1zM1320 657h1v2h-1zM1325 656h1v3h-1zM1330 655h1v4h-1zM1335 654h1v5h-1zM1340 654h1v5h-1zM1345 654h1v5h-1zM1350 654h1v5h-1zM1355 655h1v4h-1zM1360 656h1v3h-1zM1365 657h1v2h-1zM1370 656h1v3h-1zM1375 656h1v3h-1zM1380 657h1v2h-1zM1385 656h1v3h-1zM1390 655h1v4h-1zM1395 655h1v4h-1zM1400 656h1v3h-1zM1405 658h1v1h-1zM1410 658h1v1h-1zM1500 657h1v2h-1zM1505 656h1v3h-1z" fill="#ff0000" shape-rendering="crispEdges"/><path d="M20 660h1v1h-1zM70 660h1v1h-1zM75 660h1v1h-1zM80 660h1v2h-1zM85 660h1v1h-1zM105 660h1v1h-1zM110 660h1v2h-1zM115 660h1v1h-1zM120 660h1v1h-1zM125 660h1v1h-1zM130 660h1v1h-1zM135 660h1v2h-1zM140 660h1v2h-1zM145 660h1v2h-1zM150 660h1v2h-1zM155 660h1v3h-1zM160 660h1v2h-1zM165 660h1v2h-1zM170 660h1v3h-1zM175 660h1v4h-1zM180 660h1v4h-1zM185 660h1v3h-1zM335 660h1v1h-1zM340 660h1v2h-1zM345 660h1v1h-1zM350 660h1v1h-1zM355 660h1v2h-1zM360 660h1v1h-1zM365 660h1v2h-1zM370 660h1v2h-1zM375 660h1v3h-1zM380 660h1v2h-1zM385 660h1v2h-1zM390 660h1v1h-1zM420 660h1v1h-1zM425 660h1v1h-1zM430 660h1v1h-1zM435 660h1v2h-1zM440 660h1v3h-1zM445 660h1v4h-1zM450 660h1v3h-1zM455 660h1v3h-1zM460 660h1v3h-1zM465 660h1v3h-1zM470 660h1v4h-1zM475 660h1v4h-1zM480 660h1v3h-1zM485 660h1v2h-1zM490 660h1v1h-1zM550 660h1v1h-1zM555 660h1v3h-1zM560 660h1v3h-1zM565 660h1v3h-1zM570 660h1v2h-1zM575 660h1v3h-1zM580 660h1v3h-1zM585 660h1v2h-1zM590 660h1v3h-1zM595 660h1v3h-1zM600 660h1v3h-1zM605 660h1v3h-1zM610 660h1v5h-1zM615 660h1v10h-1zM620 660h1v19h-1zM625 660h1v20h-1zM630 660h1v21h-1zM635 660h1v19h-1zM640 660h1v13h-1zM645 660h1v10h-1zM650 660h1v8h-1zM655 660h1v5h-1zM660 660h1v2h-1zM665 660h1v1h-1zM815 660h1v1h-1zM820 660h1v2h-1zM825 660h1v1h-1zM830 660h1v2h-1zM835 660h1v2h-1zM840 660h1v3h-1zM845 660h1v3h-1zM850 660h1v3h-1zM855 660h1v2h-1zM860 660h1v2h-1zM865 660h1v2h-1zM890 660h1v1h-1zM895 660h1v1h-1zM900 660h1v1h-1zM905 660h1v1h-1zM910 660h1v1h-1zM915 660h1v1h-1zM935 660h1v1h-1zM940 660h1v1h-1zM945 660h1v1h-1zM1040 660h1v1h-1zM1045 660h1v1h-1zM1050 660h1v1h-1zM1055 660h1v1h-1zM1060 660h1v1h-1zM1070 660h1v1h-1zM1075 660h1v2h-1zM1080 660h1v3h-1zM1085 660h1v3h-1zM1090 660h1v4h-1zM1095 660h1v5h-1zM1100 660h1v6h-1zM1105 660h1v9h-1zM1110 660h1v11h-1zM1115 660h1v13h-1zM1120 660h1v13h-1zM1125 660h1v12h-1zM1130 660h1v12h-1zM1135 660h1v10h-1zM1140 660h1v8h-1zM1145 660h1v6h-1zM1150 660h1v5h-1zM1155 660h1v6h-1zM1160 660h1v7h-1zM1165 660h1v6h-1zM1170 660h1v5h-1zM1175 660h1v3h-1zM1180 660h1v2h-1zM1245 660h1v1h-1zM1415 660h1v1h-1zM1420 660h1v1h-1zM1425 660h1v1h-1zM1430 660h1v3h-1zM1435 660h1v4h-1zM1440 660h1v3h-1zM1445 660h1v3h-1zM1450 660h1v4h-1zM1455 660h1v4h-1zM1460 660h1v4h-1zM1465 660h1v4h-1zM1470 660h1v4h-1zM1475 660h1v5h-1zM1480 660h1v5h-1zM1485 660h1v4h-1zM1490 660h1v2h-1zM1495 660h1v1h-1z" fill="#0000ff" shape-rendering="crispEdges"/><path d="M15.5,659.5 L20.5,659.5 L25.5,658.5 L30.5,656.5 L35.5,654.5 L40.5,653.5 L45.5,652.5 L50.5,653.5 L55.5,652.5 L60.5,652.5 L65.5,652.5 L70.5,654.5 L75.5,655.5 L80.5,656.5 L85.5,656.5 L90.5,654.5 L95.5,653.5 L100.5,653.5 L105.5,655.5 L110.5,656.5 L115.5,655.5 L120.5,656.5 L125.5,656.5 L130.5,656.5 L135.5,657.5 L140.5,659.5 L145.5,659.5 L150.5,659.5 L155.5,660.5 L160.5,661.5 L165.5,661.5 L170.5,663.5 L175.5,664.5 L180.5,665.5 L185.5,665.5 L190.5,662.5 L195.5,658.5 L200.5,656.5 L205.5,653.5 L210.5,651.5 L215.5,651.5 L220.5,649.5 L225.5,649.5 L230.5,648.5 L235.5,646.5 L240.5,645.5 L245.5,643.5 L250.5,643.5 L255.5,642.5 L260.5,642.5 L265.5,642.5 L270.5,643.5 L275.5,644.5 L280.5,643.5 L285.5,643.5 L290.5,643.5 L295.5,643.5 L300.5,643.5 L305.5,643.5 L310.5,643.5 L315.5,643.5 L320.5,642.5 L325.5,643.5 L330.5,643.5 L335.5,643.5 L340.5,645.5 L345.5,645.5 L350.5,645.5 L355.5,646.5 L360.5,646.5 L365.5,647.5 L370.5,647.5 L375.5,649.5 L380.5,648.5 L385.5,649.5 L390.5,648.5 L395.5,647.5 L400.5,646.5 L405.5,646.5 L410.5,646.5 L415.5,647.5 L420.5,647.5 L425.5,647.5 L430.5,648.5 L435.5,649.5 L440.5,651.5 L445.5,653.5 L450.5,653.5 L455.5,654.5 L460.5,654.5 L465.5,655.5 L470.5,657.5 L475.5,658.5 L480.5,657.5 L485.5,657.5 L490.5,656.5 L495.5,655.5 L500.5,653.5 L505.5,653.5 L510.5,652.5 L515.5,651.5 L520.5,650.5 L525.5,648.5 L530.5,647.5 L535.5,647.5 L540.5,646.5 L545.5,647.5 L550.5,649.5 L555.5,652.5 L560.5,653.5 L565.5,654.5 L570.5,653.5 L575.5,655.5 L580.5,655.5 L585.5,655.5 L590.5,657.5 L595.5,657.5 L600.5,658.5 L605.5,659.5 L610.5,662.5 L615.5,669.5 L620.5,683.5 L625.5,689.5 L630.5,695.5 L635.5,698.5 L640.5,695.5 L645.5,695.5 L650.5,694.5 L655.5,692.5 L660.5,691.5 L665.5,689.5 L670.5,686.5 L675.5,683.5 L680.5,680.5 L685.5,678.5 L690.5,677.5 L695.5,676.5 L700.5,675.5 L705.5,672.5 L710.5,671.5 L715.5,671.5 L720.5,670.5 L725.5,669.5 L730.5,669.5 L735.5,669.5 L740.5,670.5 L745.5,669.5 L750.5,667.5 L755.5,666.5 L760.5,665.5 L765.5,665.5 L770.5,664.5 L775.5,662.5 L780.5,659.5 L785.5,658.5 L790.5,657.5 L795.5,657.5 L800.5,656.5 L805.5,657.5 L810.5,658.5 L815.5,660.5 L820.5,661.5 L825.5,661.5 L830.5,662.5 L835.5,662.5 L840.5,664.5 L845.5,664.5 L850.5,666.5 L855.5,665.5 L860.5,665.5 L865.5,665.5 L870.5,664.5 L875.5,662.5 L880.5,662.5 L885.5,663.5 L890.5,664.5 L895.5,665.5 L900.5,665.5 L905.5,665.5 L910.5,665.5 L915.5,665.5 L920.5,664.5 L925.5,663.5 L930.5,664.5 L935.5,665.5 L940.5,665.5 L945.5,665.5 L950.5,663.5 L955.5,662.5 L960.5,660.5 L965.5,659.5 L970.5,659.5 L975.5,657.5 L980.5,655.5 L985.5,653.5 L990.5,651.5 L995.5,650.5 L1000.5,648.5 L1005.5,646.5 L1010.5,645.5 L1015.5,644.5 L1020.5,645.5 L1025.5,646.5 L1030.5,647.5 L1035.5,647.5 L1040.5,648.5 L1045.5,649.5 L1050.5,649.5 L1055.5,648.5 L1060.5,648.5 L1065.5,648.5 L1070.5,649.5 L1075.5,650.5 L1080.5,652.5 L1085.5,653.5 L1090.5,654.5 L1095.5,657.5 L1100.5,660.5 L1105.5,664.5 L1110.5,670.5 L1115.5,675.5 L1120.5,678.5 L1125.5,680.5 L1130.5,683.5 L1135.5,683.5 L1140.5,683.5 L1145.5,682.5 L1150.5,683.5 L1155.5,685.5 L1160.5,687.5 L1165.5,688.5 L1170.5,689.5 L1175.5,688.5 L1180.5,686.5 L1185.5,685.5 L1190.5,682.5 L1195.5,680.5 L1200.5,677.5 L1205.5,676.5 L1210.5,676.5 L1215.5,677.5 L1220.5,677.5 L1225.5,676.5 L1230.5,676.5 L1235.5,677.5 L1240.5,677.5 L1245.5,677.5 L1250.5,676.5 L1255.5,674.5 L1260.5,673.5 L1265.5,672.5 L1270.5,672.5 L1275.5,674.5 L1280.5,673.5 L1285.5,672.5 L1290.5,671.5 L1295.5,670.5 L1300.5,670.5 L1305.5,671.5 L1310.5,672.5 L1315.5,671.5 L1320.5,670.5 L1325.5,667.5 L1330.5,666.5 L1335.5,664.5 L1340.5,662.5 L1345.5,661.5 L1350.5,660.5 L1355.5,660.5 L1360.5,660.5 L1365.5,660.5 L1370.5,659.5 L1375.5,659.5 L1380.5,658.5 L1385.5,657.5 L1390.5,655.5 L1395.5,654.5 L1400.5,654.5 L1405.5,656.5 L1410.5,656.5 L1415.5,657.5 L1420.5,658.5 L1425.5,658.5 L1430.5,661.5 L1435.5,662.5 L1440.5,663.5 L1445.5,664.5 L1450.5,665.5 L1455.5,666.5 L1460.5,667.5 L1465.5,668.5 L1470.5,669.5 L1475.5,671.5 L1480.5,673.5 L1485.5,673.5 L1490.5,671.5 L1495.5,670.5 L1500.5,668.5 L1505.5,665.5" stroke="#009632" stroke-width="1" fill="none" stroke-linejoin="round" shape-rendering="crispEdges"/><path d="M15.5,659.5 L20.5,659.5 L25.5,659.5 L30.5,658.5 L35.5,657.5 L40.5,657.5 L45.5,656.5 L50.5,655.5 L55.5,655.5 L60.5,654.5 L65.5,654.5 L70.5,654.5 L75.5,654.5 L80.5,654.5 L85.5,655.5 L90.5,655.5 L95.5,654.5 L100.5,654.5 L105.5,654.5 L110.5,654.5 L115.5,655.5 L120.5,655.5 L125.5,655.5 L130.5,655.5 L135.5,656.5 L140.5,656.5 L145.5,657.5 L150.5,657.5 L155.5,658.5 L160.5,658.5 L165.5,659.5 L170.5,660.5 L175.5,661.5 L180.5,662.5 L185.5,662.5 L190.5,662.5 L195.5,661.5 L200.5,660.5 L205.5,659.5 L210.5,657.5 L215.5,656.5 L220.5,655.5 L225.5,654.5 L230.5,652.5 L235.5,651.5 L240.5,650.5 L245.5,649.5 L250.5,647.5 L255.5,646.5 L260.5,645.5 L265.5,645.5 L270.5,644.5 L275.5,644.5 L280.5,644.5 L285.5,644.5 L290.5,644.5 L295.5,644.5 L300.5,644.5 L305.5,643.5 L310.5,643.5 L315.5,643.5 L320.5,643.5 L325.5,643.5 L330.5,643.5 L335.5,643.5 L340.5,643.5 L345.5,644.5 L350.5,644.5 L355.5,644.5 L360.5,645.5 L365.5,645.5 L370.5,645.5 L375.5,646.5 L380.5,647.5 L385.5,647.5 L390.5,647.5 L395.5,647.5 L400.5,647.5 L405.5,647.5 L410.5,647.5 L415.5,647.5 L420.5,647.5 L425.5,647.5 L430.5,647.5 L435.5,647.5 L440.5,648.5 L445.5,649.5 L450.5,650.5 L455.5,651.5 L460.5,651.5 L465.5,652.5 L470.5,653.5 L475.5,654.5 L480.5,654.5 L485.5,655.5 L490.5,655.5 L495.5,655.5 L500.5,655.5 L505.5,654.5 L510.5,654.5 L515.5,653.5 L520.5,653.5 L525.5,652.5 L530.5,651.5 L535.5,650.5 L540.5,649.5 L545.5,649.5 L550.5,649.5 L555.5,650.5 L560.5,650.5 L565.5,651.5 L570.5,651.5 L575.5,652.5 L580.5,653.5 L585.5,653.5 L590.5,654.5 L595.5,655.5 L600.5,655.5 L605.5,656.5 L610.5,657.5 L615.5,660.5 L620.5,664.5 L625.5,669.5 L630.5,674.5 L635.5,679.5 L640.5,682.5 L645.5,685.5 L650.5,687.5 L655.5,688.5 L660.5,688.5 L665.5,688.5 L670.5,688.5 L675.5,687.5 L680.5,685.5 L685.5,684.5 L690.5,682.5 L695.5,681.5 L700.5,680.5 L705.5,678.5 L710.5,677.5 L715.5,676.5 L720.5,675.5 L725.5,673.5 L730.5,672.5 L735.5,672.5 L740.5,671.5 L745.5,671.5 L750.5,670.5 L755.5,669.5 L760.5,668.5 L765.5,668.5 L770.5,667.5 L775.5,666.5 L780.5,665.5 L785.5,663.5 L790.5,662.5 L795.5,661.5 L800.5,660.5 L805.5,659.5 L810.5,659.5 L815.5,659.5 L820.5,660.5 L825.5,660.5 L830.5,660.5 L835.5,661.5 L840.5,661.5 L845.5,662.5 L850.5,663.5 L855.5,663.5 L860.5,663.5 L865.5,664.5 L870.5,664.5 L875.5,663.5 L880.5,663.5 L885.5,663.5 L890.5,663.5 L895.5,664.5 L900.5,664.5 L905.5,664.5 L910.5,664.5 L915.5,664.5 L920.5,664.5 L925.5,664.5 L930.5,664.5 L935.5,664.5 L940.5,664.5 L945.5,664.5 L950.5,664.5 L955.5,664.5 L960.5,663.5 L965.5,662.5 L970.5,661.5 L975.5,660.5 L980.5,659.5 L985.5,658.5 L990.5,657.5 L995.5,655.5 L1000.5,654.5 L1005.5,652.5 L1010.5,651.5 L1015.5,649.5 L1020.5,649.5 L1025.5,648.5 L1030.5,648.5 L1035.5,648.5 L1040.5,648.5 L1045.5,648.5 L1050.5,648.5 L1055.5,648.5 L1060.5,648.5 L1065.5,648.5 L1070.5,648.5 L1075.5,649.5 L1080.5,649.5 L1085.5,650.5 L1090.5,651.5 L1095.5,652.5 L1100.5,654.5 L1105.5,656.5 L1110.5,659.5 L1115.5,662.5 L1120.5,665.5 L1125.5,668.5 L1130.5,671.5 L1135.5,673.5 L1140.5,675.5 L1145.5,677.5 L1150.5,678.5 L1155.5,679.5 L1160.5,681.5 L1165.5,682.5 L1170.5,684.5 L1175.5,684.5 L1180.5,685.5 L1185.5,685.5 L1190.5,684.5 L1195.5,683.5 L1200.5,682.5 L1205.5,681.5 L1210.5,680.5 L1215.5,679.5 L1220.5,679.5 L1225.5,678.5 L1230.5,678.5 L1235.5,677.5 L1240.5,677.5 L1245.5,677.5 L1250.5,677.5 L1255.5,676.5 L1260.5,676.5 L1265.5,675.5 L1270.5,674.5 L1275.5,674.5 L1280.5,674.5 L1285.5,674.5 L1290.5,673.5 L1295.5,673.5 L1300.5,672.5 L1305.5,672.5 L1310.5,672.5 L1315.5,672.5 L1320.5,671.5 L1325.5,671.5 L1330.5,670.5 L1335.5,668.5 L1340.5,667.5 L1345.5,666.5 L1350.5,665.5 L1355.5,664.5 L1360.5,663.5 L1365.5,662.5 L1370.5,662.5 L1375.5,661.5 L1380.5,661.5 L1385.5,660.5 L1390.5,659.5 L1395.5,658.5 L1400.5,657.5 L1405.5,657.5 L1410.5,657.5 L1415.5,657.5 L1420.5,657.5 L1425.5,657.5 L1430.5,658.5 L1435.5,659.5 L1440.5,660.5 L1445.5,661.5 L1450.5,661.5 L1455.5,662.5 L1460.5,663.5 L1465.5,664.5 L1470.5,665.5 L1475.5,667.5 L1480.5,668.5 L1485.5,669.5 L1490.5,669.5 L1495.5,669.5 L1500.5,669.5 L1505.5,668.5" stroke="#e65000" stroke-width="1" fill="none" stroke-linejoin="round" shape-rendering="crispEdges"/><path d="M11 659.5H1506" stroke="#ff14c8" stroke-width="1" shape-rendering="crispEdges"/><path d="M35.5,738.5 L40.5,739.5 L45.5,738.5 L50.5,745.5 L55.5,742.5 L60.5,746.5 L65.5,745.5 L70.5,748.5 L75.5,746.5 L80.5,748.5 L85.5,744.5 L90.5,741.5 L95.5,738.5 L100.5,740.5 L105.5,744.5 L110.5,746.5 L115.5,746.5 L120.5,748.5 L125.5,746.5 L130.5,741.5 L135.5,745.5 L140.5,748.5 L145.5,745.5 L150.5,746.5 L155.5,747.5 L160.5,744.5 L165.5,744.5 L170.5,748.5 L175.5,749.5 L180.5,747.5 L185.5,744.5 L190.5,739.5 L195.5,734.5 L200.5,733.5 L205.5,732.5 L210.5,735.5 L215.5,743.5 L220.5,742.5 L225.5,742.5 L230.5,744.5 L235.5,741.5 L240.5,739.5 L245.5,739.5 L250.5,740.5 L255.5,739.5 L260.5,744.5 L265.5,742.5 L270.5,747.5 L275.5,745.5 L280.5,742.5 L285.5,742.5 L290.5,744.5 L295.5,741.5 L300.5,740.5 L305.5,742.5 L310.5,743.5 L315.5,741.5 L320.5,741.5 L325.5,743.5 L330.5,743.5 L335.5,743.5 L340.5,745.5 L345.5,743.5 L350.5,743.5 L355.5,744.5 L360.5,743.5 L365.5,743.5 L370.5,744.5 L375.5,746.5 L380.5,742.5 L385.5,744.5 L390.5,740.5 L395.5,741.5 L400.5,739.5 L405.5,742.5 L410.5,741.5 L415.5,745.5 L420.5,745.5 L425.5,744.5 L430.5,744.5 L435.5,747.5 L440.5,748.5 L445.5,746.5 L450.5,745.5 L455.5,746.5 L460.5,743.5 L465.5,743.5 L470.5,746.5 L475.5,747.5 L480.5,743.5 L485.5,745.5 L490.5,741.5 L495.5,738.5 L500.5,738.5 L505.5,741.5 L510.5,741.5 L515.5,741.5 L520.5,741.5 L525.5,741.5 L530.5,740.5 L535.5,740.5 L540.5,742.5 L545.5,745.5 L550.5,748.5 L555.5,750.5 L560.5,749.5 L565.5,748.5 L570.5,742.5 L575.5,745.5 L580.5,741.5 L585.5,742.5 L590.5,746.5 L595.5,748.5 L600.5,742.5 L605.5,747.5 L610.5,751.5 L615.5,759.5 L620.5,776.5 L625.5,768.5 L630.5,768.5 L635.5,762.5 L640.5,744.5 L645.5,727.5 L650.5,738.5 L655.5,733.5 L660.5,739.5 L665.5,747.5 L670.5,739.5 L675.5,738.5 L680.5,741.5 L685.5,740.5 L690.5,742.5 L695.5,746.5 L700.5,747.5 L705.5,743.5 L710.5,744.5 L715.5,745.5 L720.5,743.5 L725.5,743.5 L730.5,747.5 L735.5,747.5 L740.5,746.5 L745.5,745.5 L750.5,744.5 L755.5,742.5 L760.5,742.5 L765.5,742.5 L770.5,742.5 L775.5,741.5 L780.5,738.5 L785.5,740.5 L790.5,739.5 L795.5,742.5 L800.5,744.5 L805.5,749.5 L810.5,748.5 L815.5,749.5 L820.5,749.5 L825.5,748.5 L830.5,746.5 L835.5,745.5 L840.5,746.5 L845.5,746.5 L850.5,748.5 L855.5,745.5 L860.5,745.5 L865.5,743.5 L870.5,740.5 L875.5,739.5 L880.5,745.5 L885.5,745.5 L890.5,746.5 L895.5,748.5 L900.5,749.5 L905.5,745.5 L910.5,744.5 L915.5,743.5 L920.5,742.5 L925.5,742.5 L930.5,745.5 L935.5,747.5 L940.5,746.5 L945.5,746.5 L950.5,743.5 L955.5,741.5 L960.5,737.5 L965.5,740.5 L970.5,741.5 L975.5,741.5 L980.5,740.5 L985.5,741.5 L990.5,737.5 L995.5,738.5 L1000.5,739.5 L1005.5,739.5 L1010.5,739.5 L1015.5,742.5 L1020.5,745.5 L1025.5,746.5 L1030.5,746.5 L1035.5,747.5 L1040.5,747.5 L1045.5,743.5 L1050.5,744.5 L1055.5,741.5 L1060.5,743.5 L1065.5,740.5 L1070.5,743.5 L1075.5,746.5 L1080.5,749.5 L1085.5,745.5 L1090.5,749.5 L1095.5,751.5 L1100.5,749.5 L1105.5,754.5 L1110.5,759.5 L1115.5,760.5 L1120.5,755.5 L1125.5,756.5 L1130.5,750.5 L1135.5,744.5 L1140.5,741.5 L1145.5,743.5 L1150.5,745.5 L1155.5,748.5 L1160.5,753.5 L1165.5,751.5 L1170.5,753.5 L1175.5,747.5 L1180.5,742.5 L1185.5,739.5 L1190.5,740.5 L1195.5,737.5 L1200.5,738.5 L1205.5,741.5 L1210.5,745.5 L1215.5,751.5 L1220.5,748.5 L1225.5,750.5 L1230.5,748.5 L1235.5,749.5 L1240.5,743.5 L1245.5,749.5 L1250.5,746.5 L1255.5,741.5 L1260.5,740.5 L1265.5,742.5 L1270.5,743.5 L1275.5,750.5 L1280.5,749.5 L1285.5,746.5 L1290.5,745.5 L1295.5,741.5 L1300.5,741.5 L1305.5,747.5 L1310.5,749.5 L1315.5,748.5 L1320.5,745.5 L1325.5,739.5 L1330.5,738.5 L1335.5,735.5 L1340.5,739.5 L1345.5,739.5 L1350.5,745.5 L1355.5,744.5 L1360.5,747.5 L1365.5,746.5 L1370.5,745.5 L1375.5,743.5 L1380.5,744.5 L1385.5,739.5 L1390.5,737.5 L1395.5,741.5 L1400.5,743.5 L1405.5,746.5 L1410.5,747.5 L1415.5,749.5 L1420.5,750.5 L1425.5,746.5 L1430.5,747.5 L1435.5,750.5 L1440.5,746.5 L1445.5,746.5 L1450.5,750.5 L1455.5,744.5 L1460.5,746.5 L1465.5,750.5 L1470.5,749.5 L1475.5,750.5 L1480.5,751.5 L1485.5,746.5 L1490.5,741.5 L1495.5,741.5 L1500.5,735.5 L1505.5,734.5" stroke="#009632" stroke-width="1" fill="none" stroke-linejoin="round" shape-rendering="crispEdges"/><path d="M55.5,740.5 L60.5,742.5 L65.5,743.5 L70.5,745.5 L75.5,745.5 L80.5,747.5 L85.5,746.5 L90.5,745.5 L95.5,743.5 L100.5,742.5 L105.5,741.5 L110.5,742.5 L115.5,743.5 L120.5,745.5 L125.5,746.5 L130.5,745.5 L135.5,745.5 L140.5,745.5 L145.5,745.5 L150.5,745.5 L155.5,746.5 L160.5,746.5 L165.5,745.5 L170.5,746.5 L175.5,746.5 L180.5,746.5 L185.5,747.5 L190.5,745.5 L195.5,743.5 L200.5,740.5 L205.5,736.5 L210.5,735.5 L215.5,735.5 L220.5,737.5 L225.5,739.5 L230.5,741.5 L235.5,743.5 L240.5,742.5 L245.5,741.5 L250.5,741.5 L255.5,740.5 L260.5,740.5 L265.5,741.5 L270.5,742.5 L275.5,743.5 L280.5,744.5 L285.5,744.5 L290.5,744.5 L295.5,743.5 L300.5,742.5 L305.5,742.5 L310.5,742.5 L315.5,741.5 L320.5,741.5 L325.5,742.5 L330.5,742.5 L335.5,742.5 L340.5,743.5 L345.5,743.5 L350.5,744.5 L355.5,744.5 L360.5,744.5 L365.5,743.5 L370.5,744.5 L375.5,744.5 L380.5,744.5 L385.5,744.5 L390.5,743.5 L395.5,743.5 L400.5,741.5 L405.5,741.5 L410.5,740.5 L415.5,741.5 L420.5,742.5 L425.5,743.5 L430.5,744.5 L435.5,745.5 L440.5,745.5 L445.5,746.5 L450.5,746.5 L455.5,746.5 L460.5,746.5 L465.5,745.5 L470.5,745.5 L475.5,745.5 L480.5,744.5 L485.5,745.5 L490.5,744.5 L495.5,743.5 L500.5,741.5 L505.5,741.5 L510.5,740.5 L515.5,740.5 L520.5,741.5 L525.5,741.5 L530.5,741.5 L535.5,741.5 L540.5,741.5 L545.5,742.5 L550.5,743.5 L555.5,745.5 L560.5,747.5 L565.5,748.5 L570.5,748.5 L575.5,747.5 L580.5,745.5 L585.5,744.5 L590.5,743.5 L595.5,744.5 L600.5,744.5 L605.5,745.5 L610.5,747.5 L615.5,749.5 L620.5,755.5 L625.5,760.5 L630.5,764.5 L635.5,767.5 L640.5,764.5 L645.5,754.5 L650.5,748.5 L655.5,741.5 L660.5,736.5 L665.5,737.5 L670.5,739.5 L675.5,739.5 L680.5,741.5 L685.5,741.5 L690.5,740.5 L695.5,741.5 L700.5,743.5 L705.5,743.5 L710.5,744.5 L715.5,745.5 L720.5,744.5 L725.5,743.5 L730.5,744.5 L735.5,745.5 L740.5,745.5 L745.5,746.5 L750.5,746.5 L755.5,745.5 L760.5,744.5 L765.5,743.5 L770.5,742.5 L775.5,742.5 L780.5,741.5 L785.5,741.5 L790.5,740.5 L795.5,740.5 L800.5,741.5 L805.5,743.5 L810.5,744.5 L815.5,746.5 L820.5,748.5 L825.5,748.5 L830.5,748.5 L835.5,747.5 L840.5,746.5 L845.5,746.5 L850.5,746.5 L855.5,746.5 L860.5,746.5 L865.5,745.5 L870.5,744.5 L875.5,742.5 L880.5,742.5 L885.5,742.5 L890.5,743.5 L895.5,745.5 L900.5,747.5 L905.5,747.5 L910.5,747.5 L915.5,746.5 L920.5,744.5 L925.5,743.5 L930.5,743.5 L935.5,744.5 L940.5,744.5 L945.5,745.5 L950.5,745.5 L955.5,744.5 L960.5,742.5 L965.5,741.5 L970.5,740.5 L975.5,740.5 L980.5,740.5 L985.5,741.5 L990.5,740.5 L995.5,740.5 L1000.5,739.5 L1005.5,739.5 L1010.5,738.5 L1015.5,739.5 L1020.5,741.5 L1025.5,742.5 L1030.5,744.5 L1035.5,745.5 L1040.5,746.5 L1045.5,746.5 L1050.5,745.5 L1055.5,744.5 L1060.5,743.5 L1065.5,742.5 L1070.5,742.5 L1075.5,742.5 L1080.5,744.5 L1085.5,745.5 L1090.5,746.5 L1095.5,748.5 L1100.5,749.5 L1105.5,749.5 L1110.5,752.5 L1115.5,754.5 L1120.5,755.5 L1125.5,757.5 L1130.5,756.5 L1135.5,753.5 L1140.5,749.5 L1145.5,747.5 L1150.5,745.5 L1155.5,744.5 L1160.5,746.5 L1165.5,748.5 L1170.5,750.5 L1175.5,750.5 L1180.5,749.5 L1185.5,746.5 L1190.5,744.5 L1195.5,741.5 L1200.5,739.5 L1205.5,739.5 L1210.5,740.5 L1215.5,743.5 L1220.5,745.5 L1225.5,747.5 L1230.5,748.5 L1235.5,749.5 L1240.5,748.5 L1245.5,748.5 L1250.5,747.5 L1255.5,746.5 L1260.5,744.5 L1265.5,744.5 L1270.5,742.5 L1275.5,743.5 L1280.5,745.5 L1285.5,746.5 L1290.5,747.5 L1295.5,746.5 L1300.5,744.5 L1305.5,744.5 L1310.5,745.5 L1315.5,745.5 L1320.5,746.5 L1325.5,746.5 L1330.5,744.5 L1335.5,741.5 L1340.5,739.5 L1345.5,738.5 L1350.5,739.5 L1355.5,740.5 L1360.5,743.5 L1365.5,744.5 L1370.5,745.5 L1375.5,745.5 L1380.5,745.5 L1385.5,743.5 L1390.5,742.5 L1395.5,741.5 L1400.5,741.5 L1405.5,741.5 L1410.5,743.5 L1415.5,745.5 L1420.5,747.5 L1425.5,748.5 L1430.5,748.5 L1435.5,748.5 L1440.5,748.5 L1445.5,747.5 L1450.5,748.5 L1455.5,747.5 L1460.5,747.5 L1465.5,747.5 L1470.5,748.5 L1475.5,748.5 L1480.5,749.5 L1485.5,749.5 L1490.5,747.5 L1495.5,746.5 L1500.5,743.5 L1505.5,739.5" stroke="#e65000" stroke-width="1" fill="none" stroke-linejoin="round" shape-rendering="crispEdges"/><path d="M11 824.5H1506" stroke="#0064dc" stroke-width="1" shape-rendering="crispEdges"/><path d="M11 856.5H1506" stroke="#e65000" stroke-width="1" shape-rendering="crispEdges"/><path d="M80.5,838.5 L85.5,833.5 L90.5,828.5 L95.5,834.5 L100.5,837.5 L105.5,848.5 L110.5,846.5 L115.5,840.5 L120.5,839.5 L125.5,844.5 L130.5,839.5 L135.5,846.5 L140.5,840.5 L145.5,839.5 L150.5,839.5 L155.5,846.5 L160.5,853.5 L165.5,853.5 L170.5,855.5 L175.5,851.5 L180.5,849.5 L185.5,849.5 L190.5,835.5 L195.5,832.5 L200.5,834.5 L205.5,824.5 L210.5,823.5 L215.5,831.5 L220.5,827.5 L225.5,826.5 L230.5,826.5 L235.5,822.5 L240.5,815.5 L245.5,810.5 L250.5,814.5 L255.5,816.5 L260.5,823.5 L265.5,823.5 L270.5,832.5 L275.5,834.5 L280.5,829.5 L285.5,823.5 L290.5,827.5 L295.5,828.5 L300.5,825.5 L305.5,829.5 L310.5,832.5 L315.5,833.5 L320.5,829.5 L325.5,831.5 L330.5,828.5 L335.5,832.5 L340.5,826.5 L345.5,823.5 L350.5,831.5 L355.5,833.5 L360.5,829.5 L365.5,832.5 L370.5,834.5 L375.5,843.5 L380.5,832.5 L385.5,836.5 L390.5,832.5 L395.5,831.5 L400.5,832.5 L405.5,832.5 L410.5,825.5 L415.5,835.5 L420.5,833.5 L425.5,830.5 L430.5,832.5 L435.5,834.5 L440.5,843.5 L445.5,835.5 L450.5,837.5 L455.5,840.5 L460.5,842.5 L465.5,848.5 L470.5,851.5 L475.5,849.5 L480.5,844.5 L485.5,842.5 L490.5,838.5 L495.5,838.5 L500.5,837.5 L505.5,834.5 L510.5,827.5 L515.5,826.5 L520.5,828.5 L525.5,822.5 L530.5,824.5 L535.5,814.5 L540.5,804.5 L545.5,822.5 L550.5,835.5 L555.5,840.5 L560.5,841.5 L565.5,838.5 L570.5,835.5 L575.5,844.5 L580.5,840.5 L585.5,841.5 L590.5,847.5 L595.5,848.5 L600.5,847.5 L605.5,850.5 L610.5,854.5 L615.5,859.5 L620.5,865.5 L625.5,856.5 L630.5,858.5 L635.5,856.5 L640.5,852.5 L645.5,851.5 L650.5,853.5 L655.5,852.5 L660.5,851.5 L665.5,852.5 L670.5,849.5 L675.5,848.5 L680.5,846.5 L685.5,838.5 L690.5,820.5 L695.5,827.5 L700.5,822.5 L705.5,823.5 L710.5,836.5 L715.5,836.5 L720.5,833.5 L725.5,835.5 L730.5,836.5 L735.5,837.5 L740.5,851.5 L745.5,845.5 L750.5,841.5 L755.5,841.5 L760.5,837.5 L765.5,841.5 L770.5,837.5 L775.5,838.5 L780.5,831.5 L785.5,831.5 L790.5,835.5 L795.5,835.5 L800.5,832.5 L805.5,835.5 L810.5,834.5 L815.5,842.5 L820.5,844.5 L825.5,841.5 L830.5,842.5 L835.5,838.5 L840.5,848.5 L845.5,854.5 L850.5,864.5 L855.5,852.5 L860.5,851.5 L865.5,854.5 L870.5,846.5 L875.5,840.5 L880.5,844.5 L885.5,842.5 L890.5,847.5 L895.5,847.5 L900.5,846.5 L905.5,845.5 L910.5,838.5 L915.5,841.5 L920.5,835.5 L925.5,840.5 L930.5,845.5 L935.5,846.5 L940.5,855.5 L945.5,851.5 L950.5,836.5 L955.5,835.5 L960.5,827.5 L965.5,834.5 L970.5,833.5 L975.5,828.5 L980.5,829.5 L985.5,826.5 L990.5,826.5 L995.5,825.5 L1000.5,815.5 L1005.5,811.5 L1010.5,811.5 L1015.5,815.5 L1020.5,829.5 L1025.5,825.5 L1030.5,829.5 L1035.5,823.5 L1040.5,829.5 L1045.5,832.5 L1050.5,832.5 L1055.5,828.5 L1060.5,836.5 L1065.5,835.5 L1070.5,842.5 L1075.5,847.5 L1080.5,851.5 L1085.5,844.5 L1090.5,843.5 L1095.5,851.5 L1100.5,850.5 L1105.5,857.5 L1110.5,859.5 L1115.5,864.5 L1120.5,861.5 L1125.5,866.5 L1130.5,866.5 L1135.5,863.5 L1140.5,862.5 L1145.5,861.5 L1150.5,862.5 L1155.5,869.5 L1160.5,869.5 L1165.5,862.5 L1170.5,864.5 L1175.5,853.5 L1180.5,849.5 L1185.5,843.5 L1190.5,842.5 L1195.5,841.5 L1200.5,836.5 L1205.5,845.5 L1210.5,849.5 L1215.5,853.5 L1220.5,844.5 L1225.5,838.5 L1230.5,837.5 L1235.5,846.5 L1240.5,840.5 L1245.5,848.5 L1250.5,843.5 L1255.5,840.5 L1260.5,845.5 L1265.5,845.5 L1270.5,851.5 L1275.5,852.5 L1280.5,844.5 L1285.5,839.5 L1290.5,842.5 L1295.5,842.5 L1300.5,844.5 L1305.5,842.5 L1310.5,846.5 L1315.5,840.5 L1320.5,842.5 L1325.5,842.5 L1330.5,839.5 L1335.5,838.5 L1340.5,834.5 L1345.5,825.5 L1350.5,836.5 L1355.5,836.5 L1360.5,841.5 L1365.5,840.5 L1370.5,830.5 L1375.5,831.5 L1380.5,828.5 L1385.5,827.5 L1390.5,827.5 L1395.5,833.5 L1400.5,837.5 L1405.5,846.5 L1410.5,838.5 L1415.5,844.5 L1420.5,842.5 L1425.5,841.5 L1430.5,845.5 L1435.5,844.5 L1440.5,846.5 L1445.5,846.5 L1450.5,847.5 L1455.5,852.5 L1460.5,857.5 L1465.5,857.5 L1470.5,855.5 L1475.5,854.5 L1480.5,863.5 L1485.5,855.5 L1490.5,846.5 L1495.5,850.5 L1500.5,837.5 L1505.5,835.5" stroke="#009632" stroke-width="1" fill="none" stroke-linejoin="round" shape-rendering="crispEdges"/><rect x="1514" y="102" width="2" height="853" fill="#000" shape-rendering="crispEdges"/><rect x="11" y="425" width="1503" height="2" fill="#000" shape-rendering="crispEdges"/><rect x="11" y="519" width="1503" height="2" fill="#000" shape-rendering="crispEdges"/><rect x="11" y="618" width="1503" height="2" fill="#000" shape-rendering="crispEdges"/><rect x="11" y="704" width="1503" height="2" fill="#000" shape-rendering="crispEdges"/><rect x="11" y="782" width="1503" height="2" fill="#000" shape-rendering="crispEdges"/><rect x="11" y="875" width="1503" height="2" fill="#000" shape-rendering="crispEdges"/><rect x="11" y="949" width="1505" height="2" fill="#000" shape-rendering="crispEdges"/><text x="1524" y="187" fill="#000" font-size="13.5" textLength="52" lengthAdjust="spacingAndGlyphs">11000.00</text><text x="1524" y="265" fill="#000" font-size="13.5" textLength="52" lengthAdjust="spacingAndGlyphs">10000.00</text><text x="1524" y="342" fill="#000" font-size="13.5" textLength="45" lengthAdjust="spacingAndGlyphs">9000.00</text><text x="1524" y="419" fill="#000" font-size="13.5" textLength="45" lengthAdjust="spacingAndGlyphs">8000.00</text><text x="1524" y="468" fill="#000" font-size="13.5" textLength="38" lengthAdjust="spacingAndGlyphs">100.00</text><text x="1524" y="496" fill="#000" font-size="13.5" textLength="31" lengthAdjust="spacingAndGlyphs">90.00</text><text x="1524" y="551" fill="#000" font-size="13.5" textLength="31" lengthAdjust="spacingAndGlyphs">80.00</text><text x="1524" y="575" fill="#000" font-size="13.5" textLength="31" lengthAdjust="spacingAndGlyphs">60.00</text><text x="1524" y="599" fill="#000" font-size="13.5" textLength="31" lengthAdjust="spacingAndGlyphs">40.00</text><text x="1524" y="664" fill="#000" font-size="13.5" textLength="24" lengthAdjust="spacingAndGlyphs">0.00</text><text x="1524" y="749" fill="#000" font-size="13.5" textLength="38" lengthAdjust="spacingAndGlyphs">100.00</text><text x="1524" y="804" fill="#000" font-size="13.5" textLength="38" lengthAdjust="spacingAndGlyphs">100.00</text><text x="1524" y="845" fill="#000" font-size="13.5" textLength="31" lengthAdjust="spacingAndGlyphs">50.00</text><text x="1524" y="901" fill="#000" font-size="13.5" textLength="52" lengthAdjust="spacingAndGlyphs">60000.00</text><text x="1524" y="922" fill="#000" font-size="13.5" textLength="52" lengthAdjust="spacingAndGlyphs">40000.00</text><text x="1524" y="944" fill="#000" font-size="13.5" textLength="52" lengthAdjust="spacingAndGlyphs">20000.00</text><path d="M1516 105h5v1h-5zM1516 182h5v1h-5zM1516 260h5v1h-5zM1516 337h5v1h-5zM1516 414h5v1h-5zM1516 143h3v1h-3zM1516 221h3v1h-3zM1516 298h3v1h-3zM1516 375h3v1h-3zM1516 435h5v1h-5zM1516 463h5v1h-5zM1516 491h5v1h-5zM1516 449h3v1h-3zM1516 477h3v1h-3zM1516 505h3v1h-3zM1516 523h5v1h-5zM1516 546h5v1h-5zM1516 570h5v1h-5zM1516 594h5v1h-5zM1516 535h3v1h-3zM1516 558h3v1h-3zM1516 582h3v1h-3zM1516 606h3v1h-3zM1516 628h3v1h-3zM1516 638h3v1h-3zM1516 649h3v1h-3zM1516 659h5v1h-5zM1516 669h3v1h-3zM1516 680h3v1h-3zM1516 690h3v1h-3zM1516 701h3v1h-3zM1516 710h5v1h-5zM1516 744h5v1h-5zM1516 779h5v1h-5zM1516 727h3v1h-3zM1516 761h3v1h-3zM1516 799h5v1h-5zM1516 840h5v1h-5zM1516 896h5v1h-5zM1516 917h5v1h-5zM1516 885h3v1h-3zM1516 907h3v1h-3zM1516 928h3v1h-3z" fill="#000" shape-rendering="crispEdges"/><rect x="1517.5" y="940.5" width="29" height="14" fill="#fff" stroke="#000" stroke-width="1" shape-rendering="crispEdges"/><text x="1519.5" y="952.3" fill="#000" font-size="13.5" textLength="26" lengthAdjust="spacingAndGlyphs">x100</text><path d="M40 951h1v6h-1zM55 951h1v6h-1zM105 951h1v6h-1zM125 951h1v6h-1zM150 951h1v6h-1zM195 951h1v6h-1zM220 951h1v6h-1zM245 951h1v6h-1zM290 951h1v6h-1zM315 951h1v6h-1zM340 951h1v6h-1zM360 951h1v6h-1zM400 951h1v6h-1zM420 951h1v6h-1zM445 951h1v6h-1zM495 951h1v6h-1zM515 951h1v6h-1zM540 951h1v6h-1zM590 951h1v6h-1zM615 951h1v6h-1zM640 951h1v6h-1zM660 951h1v6h-1zM710 951h1v6h-1zM735 951h1v6h-1zM760 951h1v6h-1zM815 951h1v6h-1zM840 951h1v6h-1zM890 951h1v6h-1zM915 951h1v6h-1zM940 951h1v6h-1zM965 951h1v6h-1zM1015 951h1v6h-1zM1040 951h1v6h-1zM1060 951h1v6h-1zM1110 951h1v6h-1zM1135 951h1v6h-1zM1160 951h1v6h-1zM1185 951h1v6h-1zM1235 951h1v6h-1zM1260 951h1v6h-1zM1275 951h1v6h-1zM1325 951h1v6h-1zM1345 951h1v6h-1zM1370 951h1v6h-1zM1415 951h1v6h-1zM1440 951h1v6h-1zM1465 951h1v6h-1zM1485 951h1v6h-1zM265 951h1v6h-1zM470 951h1v6h-1zM565 951h1v6h-1zM865 951h1v6h-1zM1395 951h1v6h-1zM75 951h1v8h-1zM175 951h1v8h-1zM275 951h1v8h-1zM380 951h1v8h-1zM475 951h1v8h-1zM570 951h1v8h-1zM680 951h1v8h-1zM780 951h1v8h-1zM875 951h1v8h-1zM985 951h1v8h-1zM1085 951h1v8h-1zM1200 951h1v8h-1zM1300 951h1v8h-1zM1400 951h1v8h-1zM1500 951h1v8h-1z" fill="#000" shape-rendering="crispEdges"/><path d="M14 945h3V955h-3zM19 944h3V955h-3zM24 935h3V955h-3zM29 941h3V955h-3zM34 942h3V955h-3zM39 944h3V955h-3zM44 944h3V955h-3zM49 940h3V955h-3zM54 942h3V955h-3zM59 945h3V955h-3zM64 941h3V955h-3zM69 938h3V955h-3zM74 938h3V955h-3zM79 938h3V955h-3zM84 934h3V955h-3zM89 929h3V955h-3zM94 937h3V955h-3zM99 939h3V955h-3zM104 940h3V955h-3zM109 940h3V955h-3zM114 937h3V955h-3zM119 940h3V955h-3zM124 944h3V955h-3zM129 943h3V955h-3zM134 940h3V955h-3zM139 941h3V955h-3zM144 944h3V955h-3zM149 945h3V955h-3zM154 944h3V955h-3zM159 942h3V955h-3zM164 938h3V955h-3zM169 937h3V955h-3zM174 942h3V955h-3zM179 944h3V955h-3zM184 941h3V955h-3zM189 937h3V955h-3zM194 942h3V955h-3zM199 942h3V955h-3zM204 936h3V955h-3zM209 939h3V955h-3zM214 941h3V955h-3zM219 942h3V955h-3zM224 941h3V955h-3zM229 944h3V955h-3zM234 934h3V955h-3zM239 937h3V955h-3zM244 941h3V955h-3zM249 937h3V955h-3zM254 940h3V955h-3zM259 942h3V955h-3zM264 942h3V955h-3zM269 937h3V955h-3zM274 942h3V955h-3zM279 940h3V955h-3zM284 943h3V955h-3zM289 944h3V955h-3zM294 942h3V955h-3zM299 940h3V955h-3zM304 937h3V955h-3zM309 927h3V955h-3zM314 938h3V955h-3zM319 935h3V955h-3zM324 938h3V955h-3zM329 939h3V955h-3zM334 938h3V955h-3zM339 942h3V955h-3zM344 943h3V955h-3zM349 939h3V955h-3zM354 946h3V955h-3zM359 947h3V955h-3zM364 949h3V955h-3zM369 946h3V955h-3zM374 944h3V955h-3zM379 943h3V955h-3zM384 942h3V955h-3zM389 935h3V955h-3zM394 936h3V955h-3zM399 938h3V955h-3zM404 933h3V955h-3zM409 936h3V955h-3zM414 934h3V955h-3zM419 940h3V955h-3zM424 939h3V955h-3zM429 936h3V955h-3zM434 938h3V955h-3zM439 932h3V955h-3zM444 940h3V955h-3zM449 939h3V955h-3zM454 943h3V955h-3zM459 939h3V955h-3zM464 938h3V955h-3zM469 939h3V955h-3zM474 939h3V955h-3zM479 934h3V955h-3zM484 939h3V955h-3zM489 933h3V955h-3zM494 937h3V955h-3zM499 937h3V955h-3zM504 936h3V955h-3zM509 938h3V955h-3zM514 938h3V955h-3zM519 938h3V955h-3zM524 932h3V955h-3zM529 934h3V955h-3zM534 937h3V955h-3zM539 938h3V955h-3zM544 933h3V955h-3zM549 933h3V955h-3zM554 933h3V955h-3zM559 937h3V955h-3zM564 933h3V955h-3zM569 936h3V955h-3zM574 937h3V955h-3zM579 940h3V955h-3zM584 935h3V955h-3zM589 937h3V955h-3zM594 937h3V955h-3zM599 940h3V955h-3zM604 939h3V955h-3zM609 927h3V955h-3zM614 908h3V955h-3zM619 899h3V955h-3zM624 908h3V955h-3zM629 916h3V955h-3zM634 925h3V955h-3zM639 921h3V955h-3zM644 918h3V955h-3zM649 925h3V955h-3zM654 926h3V955h-3zM659 929h3V955h-3zM664 929h3V955h-3zM669 927h3V955h-3zM674 932h3V955h-3zM679 931h3V955h-3zM684 933h3V955h-3zM689 932h3V955h-3zM694 931h3V955h-3zM699 936h3V955h-3zM704 930h3V955h-3zM709 938h3V955h-3zM714 936h3V955h-3zM719 937h3V955h-3zM724 936h3V955h-3zM729 938h3V955h-3zM734 943h3V955h-3zM739 940h3V955h-3zM744 941h3V955h-3zM749 942h3V955h-3zM754 941h3V955h-3zM759 944h3V955h-3zM764 944h3V955h-3zM769 941h3V955h-3zM774 937h3V955h-3zM779 941h3V955h-3zM784 940h3V955h-3zM789 942h3V955h-3zM794 940h3V955h-3zM799 938h3V955h-3zM804 939h3V955h-3zM809 930h3V955h-3zM814 941h3V955h-3zM819 940h3V955h-3zM824 941h3V955h-3zM829 942h3V955h-3zM834 942h3V955h-3zM839 941h3V955h-3zM844 942h3V955h-3zM849 943h3V955h-3zM854 943h3V955h-3zM859 944h3V955h-3zM864 945h3V955h-3zM869 936h3V955h-3zM874 939h3V955h-3zM879 938h3V955h-3zM884 942h3V955h-3zM889 940h3V955h-3zM894 941h3V955h-3zM899 942h3V955h-3zM904 940h3V955h-3zM909 934h3V955h-3zM914 945h3V955h-3zM919 939h3V955h-3zM924 939h3V955h-3zM929 941h3V955h-3zM934 939h3V955h-3zM939 943h3V955h-3zM944 943h3V955h-3zM949 940h3V955h-3zM954 942h3V955h-3zM959 941h3V955h-3zM964 943h3V955h-3zM969 942h3V955h-3zM974 942h3V955h-3zM979 940h3V955h-3zM984 942h3V955h-3zM989 940h3V955h-3zM994 941h3V955h-3zM999 940h3V955h-3zM1004 941h3V955h-3zM1009 941h3V955h-3zM1014 944h3V955h-3zM1019 941h3V955h-3zM1024 941h3V955h-3zM1029 941h3V955h-3zM1034 944h3V955h-3zM1039 944h3V955h-3zM1044 944h3V955h-3zM1049 941h3V955h-3zM1054 941h3V955h-3zM1059 945h3V955h-3zM1064 943h3V955h-3zM1069 942h3V955h-3zM1074 941h3V955h-3zM1079 939h3V955h-3zM1084 940h3V955h-3zM1089 943h3V955h-3zM1094 941h3V955h-3zM1099 939h3V955h-3zM1104 933h3V955h-3zM1109 938h3V955h-3zM1114 925h3V955h-3zM1119 936h3V955h-3zM1124 936h3V955h-3zM1129 938h3V955h-3zM1134 944h3V955h-3zM1139 942h3V955h-3zM1144 943h3V955h-3zM1149 942h3V955h-3zM1154 938h3V955h-3zM1159 939h3V955h-3zM1164 938h3V955h-3zM1169 937h3V955h-3zM1174 938h3V955h-3zM1179 940h3V955h-3zM1184 939h3V955h-3zM1189 941h3V955h-3zM1194 940h3V955h-3zM1199 942h3V955h-3zM1204 942h3V955h-3zM1209 943h3V955h-3zM1214 938h3V955h-3zM1219 941h3V955h-3zM1224 944h3V955h-3zM1229 937h3V955h-3zM1234 942h3V955h-3zM1239 942h3V955h-3zM1244 941h3V955h-3zM1249 942h3V955h-3zM1254 940h3V955h-3zM1259 945h3V955h-3zM1264 945h3V955h-3zM1269 942h3V955h-3zM1274 937h3V955h-3zM1279 940h3V955h-3zM1284 940h3V955h-3zM1289 937h3V955h-3zM1294 939h3V955h-3zM1299 940h3V955h-3zM1304 938h3V955h-3zM1309 938h3V955h-3zM1314 943h3V955h-3zM1319 943h3V955h-3zM1324 943h3V955h-3zM1329 944h3V955h-3zM1334 943h3V955h-3zM1339 943h3V955h-3zM1344 945h3V955h-3zM1349 948h3V955h-3zM1354 946h3V955h-3zM1359 945h3V955h-3zM1364 946h3V955h-3zM1369 946h3V955h-3zM1374 945h3V955h-3zM1379 944h3V955h-3zM1384 941h3V955h-3zM1389 937h3V955h-3zM1394 941h3V955h-3zM1399 944h3V955h-3zM1404 941h3V955h-3zM1409 942h3V955h-3zM1414 945h3V955h-3zM1419 940h3V955h-3zM1424 941h3V955h-3zM1429 939h3V955h-3zM1434 942h3V955h-3zM1439 945h3V955h-3zM1444 947h3V955h-3zM1449 946h3V955h-3zM1454 944h3V955h-3zM1459 945h3V955h-3zM1464 947h3V955h-3zM1469 944h3V955h-3zM1474 944h3V955h-3zM1479 944h3V955h-3zM1484 946h3V955h-3zM1489 943h3V955h-3zM1494 941h3V955h-3zM1499 939h3V955h-3zM1504 943h3V955h-3z" fill="#0a9632" shape-rendering="crispEdges"/><text x="76.1" y="972" fill="#000" font-size="14" font-weight="bold" text-anchor="middle">O</text><text x="176.1" y="972" fill="#000" font-size="14" font-weight="bold" text-anchor="middle">N</text><text x="276.1" y="972" fill="#000" font-size="14" font-weight="bold" text-anchor="middle">D</text><text x="381.1" y="972" fill="#000" font-size="14" font-weight="bold" text-anchor="middle">11</text><text x="476.1" y="972" fill="#000" font-size="14" font-weight="bold" text-anchor="middle">F</text><text x="571.1" y="972" fill="#000" font-size="14" font-weight="bold" text-anchor="middle">M</text><text x="681.1" y="972" fill="#000" font-size="14" font-weight="bold" text-anchor="middle">A</text><text x="781.1" y="972" fill="#000" font-size="14" font-weight="bold" text-anchor="middle">M</text><text x="876.1" y="972" fill="#000" font-size="14" font-weight="bold" text-anchor="middle">J</text><text x="986.1" y="972" fill="#000" font-size="14" font-weight="bold" text-anchor="middle">J</text><text x="1086.1" y="972" fill="#000" font-size="14" font-weight="bold" text-anchor="middle">A</text><text x="1201.1" y="972" fill="#000" font-size="14" font-weight="bold" text-anchor="middle">S</text><text x="1301.1" y="972" fill="#000" font-size="14" font-weight="bold" text-anchor="middle">O</text><text x="1401.1" y="972" fill="#000" font-size="14" font-weight="bold" text-anchor="middle">N</text><text x="38" y="972" fill="#000" font-size="13.5" textLength="13.2" lengthAdjust="spacingAndGlyphs" text-anchor="middle">21</text><text x="54.7" y="972" fill="#000" font-size="13.5" textLength="13.2" lengthAdjust="spacingAndGlyphs" text-anchor="middle">27</text><text x="104.7" y="972" fill="#000" font-size="13.5" textLength="13.2" lengthAdjust="spacingAndGlyphs" text-anchor="middle">12</text><text x="124.7" y="972" fill="#000" font-size="13.5" textLength="13.2" lengthAdjust="spacingAndGlyphs" text-anchor="middle">18</text><text x="149.7" y="972" fill="#000" font-size="13.5" textLength="13.2" lengthAdjust="spacingAndGlyphs" text-anchor="middle">25</text><text x="194.7" y="972" fill="#000" font-size="13.5" textLength="13.2" lengthAdjust="spacingAndGlyphs" text-anchor="middle">08</text><text x="219.7" y="972" fill="#000" font-size="13.5" textLength="13.2" lengthAdjust="spacingAndGlyphs" text-anchor="middle">15</text><text x="244.7" y="972" fill="#000" font-size="13.5" textLength="13.2" lengthAdjust="spacingAndGlyphs" text-anchor="middle">22</text><text x="289.7" y="972" fill="#000" font-size="13.5" textLength="13.2" lengthAdjust="spacingAndGlyphs" text-anchor="middle">06</text><text x="314.7" y="972" fill="#000" font-size="13.5" textLength="13.2" lengthAdjust="spacingAndGlyphs" text-anchor="middle">13</text><text x="339.7" y="972" fill="#000" font-size="13.5" textLength="13.2" lengthAdjust="spacingAndGlyphs" text-anchor="middle">20</text><text x="359.7" y="972" fill="#000" font-size="13.5" textLength="13.2" lengthAdjust="spacingAndGlyphs" text-anchor="middle">27</text><text x="399.7" y="972" fill="#000" font-size="13.5" textLength="13.2" lengthAdjust="spacingAndGlyphs" text-anchor="middle">11</text><text x="419.7" y="972" fill="#000" font-size="13.5" textLength="13.2" lengthAdjust="spacingAndGlyphs" text-anchor="middle">17</text><text x="444.7" y="972" fill="#000" font-size="13.5" textLength="13.2" lengthAdjust="spacingAndGlyphs" text-anchor="middle">24</text><text x="494.7" y="972" fill="#000" font-size="13.5" textLength="13.2" lengthAdjust="spacingAndGlyphs" text-anchor="middle">07</text><text x="514.7" y="972" fill="#000" font-size="13.5" textLength="13.2" lengthAdjust="spacingAndGlyphs" text-anchor="middle">14</text><text x="539.7" y="972" fill="#000" font-size="13.5" textLength="13.2" lengthAdjust="spacingAndGlyphs" text-anchor="middle">21</text><text x="589.7" y="972" fill="#000" font-size="13.5" textLength="13.2" lengthAdjust="spacingAndGlyphs" text-anchor="middle">07</text><text x="614.7" y="972" fill="#000" font-size="13.5" textLength="13.2" lengthAdjust="spacingAndGlyphs" text-anchor="middle">14</text><text x="639.7" y="972" fill="#000" font-size="13.5" textLength="13.2" lengthAdjust="spacingAndGlyphs" text-anchor="middle">22</text><text x="659.7" y="972" fill="#000" font-size="13.5" textLength="13.2" lengthAdjust="spacingAndGlyphs" text-anchor="middle">28</text><text x="709.7" y="972" fill="#000" font-size="13.5" textLength="13.2" lengthAdjust="spacingAndGlyphs" text-anchor="middle">11</text><text x="734.7" y="972" fill="#000" font-size="13.5" textLength="13.2" lengthAdjust="spacingAndGlyphs" text-anchor="middle">18</text><text x="759.7" y="972" fill="#000" font-size="13.5" textLength="13.2" lengthAdjust="spacingAndGlyphs" text-anchor="middle">25</text><text x="814.7" y="972" fill="#000" font-size="13.5" textLength="13.2" lengthAdjust="spacingAndGlyphs" text-anchor="middle">16</text><text x="839.7" y="972" fill="#000" font-size="13.5" textLength="13.2" lengthAdjust="spacingAndGlyphs" text-anchor="middle">23</text><text x="889.7" y="972" fill="#000" font-size="13.5" textLength="13.2" lengthAdjust="spacingAndGlyphs" text-anchor="middle">06</text><text x="914.7" y="972" fill="#000" font-size="13.5" textLength="13.2" lengthAdjust="spacingAndGlyphs" text-anchor="middle">13</text><text x="939.7" y="972" fill="#000" font-size="13.5" textLength="13.2" lengthAdjust="spacingAndGlyphs" text-anchor="middle">20</text><text x="964.7" y="972" fill="#000" font-size="13.5" textLength="13.2" lengthAdjust="spacingAndGlyphs" text-anchor="middle">27</text><text x="1014.7" y="972" fill="#000" font-size="13.5" textLength="13.2" lengthAdjust="spacingAndGlyphs" text-anchor="middle">11</text><text x="1039.7" y="972" fill="#000" font-size="13.5" textLength="13.2" lengthAdjust="spacingAndGlyphs" text-anchor="middle">19</text><text x="1059.7" y="972" fill="#000" font-size="13.5" textLength="13.2" lengthAdjust="spacingAndGlyphs" text-anchor="middle">25</text><text x="1109.7" y="972" fill="#000" font-size="13.5" textLength="13.2" lengthAdjust="spacingAndGlyphs" text-anchor="middle">08</text><text x="1134.7" y="972" fill="#000" font-size="13.5" textLength="13.2" lengthAdjust="spacingAndGlyphs" text-anchor="middle">15</text><text x="1159.7" y="972" fill="#000" font-size="13.5" textLength="13.2" lengthAdjust="spacingAndGlyphs" text-anchor="middle">22</text><text x="1184.7" y="972" fill="#000" font-size="13.5" textLength="13.2" lengthAdjust="spacingAndGlyphs" text-anchor="middle">29</text><text x="1234.7" y="972" fill="#000" font-size="13.5" textLength="13.2" lengthAdjust="spacingAndGlyphs" text-anchor="middle">12</text><text x="1259.7" y="972" fill="#000" font-size="13.5" textLength="13.2" lengthAdjust="spacingAndGlyphs" text-anchor="middle">20</text><text x="1274.7" y="972" fill="#000" font-size="13.5" textLength="13.2" lengthAdjust="spacingAndGlyphs" text-anchor="middle">26</text><text x="1324.7" y="972" fill="#000" font-size="13.5" textLength="13.2" lengthAdjust="spacingAndGlyphs" text-anchor="middle">11</text><text x="1344.7" y="972" fill="#000" font-size="13.5" textLength="13.2" lengthAdjust="spacingAndGlyphs" text-anchor="middle">17</text><text x="1369.7" y="972" fill="#000" font-size="13.5" textLength="13.2" lengthAdjust="spacingAndGlyphs" text-anchor="middle">24</text><text x="1414.7" y="972" fill="#000" font-size="13.5" textLength="13.2" lengthAdjust="spacingAndGlyphs" text-anchor="middle">07</text><text x="1439.7" y="972" fill="#000" font-size="13.5" textLength="13.2" lengthAdjust="spacingAndGlyphs" text-anchor="middle">14</text><text x="1464.7" y="972" fill="#000" font-size="13.5" textLength="13.2" lengthAdjust="spacingAndGlyphs" text-anchor="middle">21</text><text x="1484.7" y="972" fill="#000" font-size="13.5" textLength="13.2" lengthAdjust="spacingAndGlyphs" text-anchor="middle">28</text><rect x="1491.5" y="427.5" width="8" height="8" fill="#fff" stroke="#808080"/><rect x="1501.5" y="427.5" width="8" height="8" fill="#fff" stroke="#808080"/><path d="M1493 431.5h5M1503.3 429.3l4.4 4.4m0 -4.4l-4.4 4.4" stroke="#000" stroke-width="1" fill="none"/><rect x="1491.5" y="521.5" width="8" height="8" fill="#fff" stroke="#808080"/><rect x="1501.5" y="521.5" width="8" height="8" fill="#fff" stroke="#808080"/><path d="M1493 525.5h5M1503.3 523.3l4.4 4.4m0 -4.4l-4.4 4.4" stroke="#000" stroke-width="1" fill="none"/><rect x="1491.5" y="620.5" width="8" height="8" fill="#fff" stroke="#808080"/><rect x="1501.5" y="620.5" width="8" height="8" fill="#fff" stroke="#808080"/><path d="M1493 624.5h5M1503.3 622.3l4.4 4.4m0 -4.4l-4.4 4.4" stroke="#000" stroke-width="1" fill="none"/><rect x="1491.5" y="706.5" width="8" height="8" fill="#fff" stroke="#808080"/><rect x="1501.5" y="706.5" width="8" height="8" fill="#fff" stroke="#808080"/><path d="M1493 710.5h5M1503.3 708.3l4.4 4.4m0 -4.4l-4.4 4.4" stroke="#000" stroke-width="1" fill="none"/><rect x="1491.5" y="784.5" width="8" height="8" fill="#fff" stroke="#808080"/><rect x="1501.5" y="784.5" width="8" height="8" fill="#fff" stroke="#808080"/><path d="M1493 788.5h5M1503.3 786.3l4.4 4.4m0 -4.4l-4.4 4.4" stroke="#000" stroke-width="1" fill="none"/><rect x="1491.5" y="877.5" width="8" height="8" fill="#fff" stroke="#808080"/><rect x="1501.5" y="877.5" width="8" height="8" fill="#fff" stroke="#808080"/><path d="M1493 881.5h5M1503.3 879.3l4.4 4.4m0 -4.4l-4.4 4.4" stroke="#000" stroke-width="1" fill="none"/><text x="13.5" y="115" fill="#000" font-size="13" textLength="50" lengthAdjust="spacingAndGlyphs">日経平均</text><text x="71" y="115" fill="#000" font-size="13" textLength="26" lengthAdjust="spacingAndGlyphs">指数</text><text x="65.5" y="115" fill="#000" font-size="13.5" textLength="4" lengthAdjust="spacingAndGlyphs">(</text><text x="99.5" y="115" fill="#000" font-size="13.5" textLength="4" lengthAdjust="spacingAndGlyphs">)</text><text x="107.6" y="115" fill="#000" font-size="13.5" textLength="89.4" lengthAdjust="spacingAndGlyphs">Bollinger_Bands</text><text x="200.7" y="115" fill="#000" font-size="13.5" textLength="33" lengthAdjust="spacingAndGlyphs">(20,2)</text><text x="236.8" y="115" fill="#000" font-size="13.5" textLength="69" lengthAdjust="spacingAndGlyphs">2011/12/02</text><text x="311" y="115" fill="#109030" font-size="13.5" textLength="47.4" lengthAdjust="spacingAndGlyphs">8,494.36</text><text x="362.9" y="115" fill="#f05010" font-size="13.5" textLength="46.5" lengthAdjust="spacingAndGlyphs">8,853.87</text><text x="414.7" y="115" fill="#1050d0" font-size="13.5" textLength="47.3" lengthAdjust="spacingAndGlyphs">8,134.86</text><text x="12" y="440" fill="#000" font-size="13" textLength="38" lengthAdjust="spacingAndGlyphs">乖離度</text><text x="55" y="440" fill="#000" font-size="13.5" textLength="25" lengthAdjust="spacingAndGlyphs">(20)</text><text x="82.5" y="440" fill="#000" font-size="13.5" textLength="68.5" lengthAdjust="spacingAndGlyphs">2011/12/02</text><text x="156" y="440" fill="#109030" font-size="13.5" textLength="38" lengthAdjust="spacingAndGlyphs">101.76</text><text x="199" y="440" fill="#f05010" font-size="13.5" textLength="37" lengthAdjust="spacingAndGlyphs">100.00</text><text x="13" y="534" fill="#000" font-size="12.5" textLength="120" lengthAdjust="spacingAndGlyphs">サイコロジカルライン</text><text x="136" y="534" fill="#000" font-size="13.5" textLength="24" lengthAdjust="spacingAndGlyphs">(12)</text><text x="164" y="534" fill="#000" font-size="13.5" textLength="68.5" lengthAdjust="spacingAndGlyphs">2011/12/02</text><text x="237.5" y="534" fill="#109030" font-size="13.5" textLength="30" lengthAdjust="spacingAndGlyphs">41.67</text><text x="272.5" y="534" fill="#f05010" font-size="13.5" textLength="31.5" lengthAdjust="spacingAndGlyphs">25.00</text><text x="309" y="534" fill="#1050d0" font-size="13.5" textLength="30" lengthAdjust="spacingAndGlyphs">75.00</text><text x="12" y="633" fill="#000" font-size="13.5" textLength="103" lengthAdjust="spacingAndGlyphs">MACD_EMA_Signal</text><text x="120" y="633" fill="#000" font-size="13.5" textLength="50" lengthAdjust="spacingAndGlyphs">(12,26,9)</text><text x="173.75" y="633" fill="#000" font-size="13.5" textLength="68.75" lengthAdjust="spacingAndGlyphs">2011/12/02</text><text x="247.5" y="633" fill="#109030" font-size="13.5" textLength="37.5" lengthAdjust="spacingAndGlyphs">-61.34</text><text x="289.5" y="633" fill="#f05010" font-size="13.5" textLength="35" lengthAdjust="spacingAndGlyphs">-91.01</text><text x="331" y="633" fill="#ff0000" font-size="13.5" textLength="30" lengthAdjust="spacingAndGlyphs">29.67</text><text x="366" y="633" fill="#ff00ff" font-size="13.5" textLength="24.5" lengthAdjust="spacingAndGlyphs">0.00</text><text x="12" y="719.5" fill="#000" font-size="13.5" textLength="61.75" lengthAdjust="spacingAndGlyphs">Momentum</text><text x="77.5" y="719.5" fill="#000" font-size="13.5" textLength="26.25" lengthAdjust="spacingAndGlyphs">(5,5)</text><text x="107" y="719.5" fill="#000" font-size="13.5" textLength="68.5" lengthAdjust="spacingAndGlyphs">2011/12/02</text><text x="180.5" y="719.5" fill="#109030" font-size="13.5" textLength="37.5" lengthAdjust="spacingAndGlyphs">105.93</text><text x="222.5" y="719.5" fill="#f05010" font-size="13.5" textLength="37.5" lengthAdjust="spacingAndGlyphs">102.63</text><text x="12" y="797.5" fill="#000" font-size="13.5" textLength="19" lengthAdjust="spacingAndGlyphs">RSI</text><text x="35" y="797.5" fill="#000" font-size="13.5" textLength="22.5" lengthAdjust="spacingAndGlyphs">(14)</text><text x="60.75" y="797.5" fill="#000" font-size="13.5" textLength="69.25" lengthAdjust="spacingAndGlyphs">2011/12/02</text><text x="134.5" y="797.5" fill="#109030" font-size="13.5" textLength="30.5" lengthAdjust="spacingAndGlyphs">55.69</text><text x="169.5" y="797.5" fill="#f05010" font-size="13.5" textLength="31" lengthAdjust="spacingAndGlyphs">30.00</text><text x="205" y="797.5" fill="#1050d0" font-size="13.5" textLength="31" lengthAdjust="spacingAndGlyphs">70.00</text><text x="13" y="890.5" fill="#000" font-size="13" textLength="37" lengthAdjust="spacingAndGlyphs">出来高</text><text x="56.25" y="890.5" fill="#000" font-size="13.5" textLength="69.25" lengthAdjust="spacingAndGlyphs">2011/12/02</text><text x="131" y="890.5" fill="#109030" font-size="13.5" textLength="71.5" lengthAdjust="spacingAndGlyphs">1,567,300.00</text><text x="1393" y="131" fill="#ff0000" font-size="13.5" textLength="61" lengthAdjust="spacingAndGlyphs">H: -20.64%</text><text x="1463" y="131" fill="#00008b" font-size="13.5" textLength="46" lengthAdjust="spacingAndGlyphs">L: 6.24%</text><text x="548" y="196" fill="#ff0000" font-size="13.5" textLength="140" lengthAdjust="spacingAndGlyphs">10,891.60 (2011/02/17)</text><path d="M545 188.5h-14m4.500 -3.500l-4.500 3.500l4.500 3.500" stroke="#ff0000" fill="none" stroke-width="1"/><text x="1315.5" y="414" fill="#00008b" font-size="13.5" textLength="130.5" lengthAdjust="spacingAndGlyphs">8,135.79 (2011/11/25)</text><path d="M1466 407.5h14m-4 -3.5l4 3.5l-4 3.5" stroke="#00008b" fill="none" stroke-width="1"/><rect x="1524" y="344" width="45" height="14" fill="#ff0000"/><text x="1525" y="356" fill="#fff" font-size="13.5" textLength="43" lengthAdjust="spacingAndGlyphs">8643.75</text><path d="M1525 369.5l4 -4.5l4 4.5z" fill="#ff0000"/><text x="1537" y="371.5" fill="#ff0000" font-size="13.5" textLength="31" lengthAdjust="spacingAndGlyphs">46.37</text><text x="1525" y="385.5" fill="#ff0000" font-size="13.5" textLength="33" lengthAdjust="spacingAndGlyphs">0.54%</text></g></svg></body></html>
